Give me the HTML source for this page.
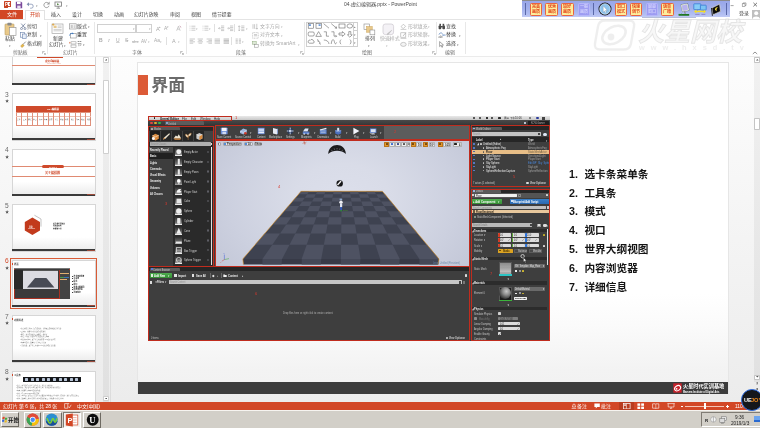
<!DOCTYPE html>
<html lang="zh"><head><meta charset="utf-8"><title>04.虚幻编辑器.pptx - PowerPoint</title>
<style>
html,body{margin:0;padding:0;}
body{width:760px;height:428px;overflow:hidden;position:relative;background:#eeeeee;
font-family:"Liberation Sans","Noto Sans CJK SC",sans-serif;}
#root{position:absolute;left:0;top:0;width:760px;height:428px;overflow:hidden;will-change:transform;}
#root div,#root span,#root svg{position:absolute;box-sizing:border-box;}
#root span{white-space:nowrap;}
</style></head><body><div id="root">
<div style="left:0px;top:0px;width:760px;height:57px;background:#ffffff;"></div>
<div style="left:0px;top:56.3px;width:760px;height:0.8px;background:#ebebeb;"></div>
<div style="left:0px;top:57px;width:760px;height:345px;background:linear-gradient(#fdfdfd,#ececec);"></div>
<div style="left:5.2px;top:1.2px;width:5.4px;height:6px;background:#fff;border:0.5px solid #c8452a;"></div>
<div style="left:3.8px;top:0.8px;width:4.6px;height:6.8px;background:#c8401f;border-radius:0.4px;"></div>
<span style="left:4.6px;top:2px;font-size:36.8px;line-height:36.8px;color:#fff;transform:scale(0.125,0.125);transform-origin:0 0;font-weight:bold;">P</span>
<div style="left:8.8px;top:2.6px;width:1.4px;height:0.5px;background:#d98a74;"></div>
<div style="left:8.8px;top:4px;width:1.4px;height:0.5px;background:#d98a74;"></div>
<svg style="left:15px;top:1px" width="8" height="8" viewBox="0 0 8 8"><path d="M0.8 0.8h5.4l1 1v5.4h-6.4z" fill="#7b4a9c"/><rect x="2" y="0.8" width="3.6" height="2.3" fill="#fff"/><rect x="2.2" y="4.6" width="3.4" height="2.6" fill="#e9dff0"/></svg>
<svg style="left:26px;top:1px" width="9" height="8" viewBox="0 0 9 8"><path d="M2 3.2h3.2a2 2 0 0 1 0 4h-1" fill="none" stroke="#8290b2" stroke-width="0.8"/><path d="M0.6 3.2l2.4-2v4z" fill="#8290b2"/></svg>
<span style="left:35.5px;top:4px;font-size:24px;line-height:24px;color:#888;transform:scale(0.125,0.125);transform-origin:0 0;">▾</span>
<svg style="left:42px;top:1px" width="9" height="8" viewBox="0 0 9 8"><path d="M6.4 2.2a2.6 2.6 0 1 0 0.6 2.6" fill="none" stroke="#9a9a9a" stroke-width="1"/><path d="M7.6 0.6v3h-3z" fill="#9a9a9a"/></svg>
<svg style="left:54px;top:1px" width="9" height="8" viewBox="0 0 9 8"><rect x="1" y="1" width="6.5" height="4.2" fill="none" stroke="#777" stroke-width="0.8"/><path d="M4.2 5.2v1.6M2.6 7.2h3.4" stroke="#777" stroke-width="0.8"/><path d="M3 2.2l2.4 1-2.4 1z" fill="#5a8a4a"/></svg>
<span style="left:65.5px;top:4px;font-size:24px;line-height:24px;color:#888;transform:scale(0.125,0.125);transform-origin:0 0;">▾</span>
<span style="left:343.6px;top:2px;font-size:40.0px;line-height:40.0px;color:#4a4a4a;transform:scale(0.125,0.125);transform-origin:0 0;">04.虚幻编辑器.pptx - PowerPoint</span>
<div style="left:0px;top:10.4px;width:22.8px;height:9px;background:#d24726;"></div>
<span style="left:6.6px;top:12px;font-size:40.8px;line-height:40.8px;color:#fff;transform:scale(0.125,0.125);transform-origin:0 0;">文件</span>
<div style="left:25.2px;top:10px;width:19.8px;height:9.8px;background:#fff;border:0.7px solid #e2e2e2;border-bottom:none;"></div>
<div style="left:0px;top:19.3px;width:25.2px;height:0.7px;background:#e4e4e4;"></div>
<div style="left:45px;top:19.3px;width:715px;height:0.7px;background:#e4e4e4;"></div>
<span style="left:30.2px;top:12px;font-size:40.8px;line-height:40.8px;color:#d24726;transform:scale(0.125,0.125);transform-origin:0 0;">开始</span>
<span style="left:50.6px;top:12px;font-size:39.2px;line-height:39.2px;color:#3c3c3c;transform:scale(0.125,0.125);transform-origin:0 0;">插入</span>
<span style="left:71.6px;top:12px;font-size:39.2px;line-height:39.2px;color:#3c3c3c;transform:scale(0.125,0.125);transform-origin:0 0;">设计</span>
<span style="left:92.6px;top:12px;font-size:39.2px;line-height:39.2px;color:#3c3c3c;transform:scale(0.125,0.125);transform-origin:0 0;">切换</span>
<span style="left:114.1px;top:12px;font-size:39.2px;line-height:39.2px;color:#3c3c3c;transform:scale(0.125,0.125);transform-origin:0 0;">动画</span>
<span style="left:134.2px;top:12px;font-size:39.2px;line-height:39.2px;color:#3c3c3c;transform:scale(0.125,0.125);transform-origin:0 0;">幻灯片放映</span>
<span style="left:169.6px;top:12px;font-size:39.2px;line-height:39.2px;color:#3c3c3c;transform:scale(0.125,0.125);transform-origin:0 0;">审阅</span>
<span style="left:191.1px;top:12px;font-size:39.2px;line-height:39.2px;color:#3c3c3c;transform:scale(0.125,0.125);transform-origin:0 0;">视图</span>
<span style="left:211.9px;top:12px;font-size:39.2px;line-height:39.2px;color:#3c3c3c;transform:scale(0.125,0.125);transform-origin:0 0;">情节提要</span>
<svg style="left:4px;top:22px" width="13" height="14" viewBox="0 0 13 14"><rect x="1" y="2" width="9" height="11" rx="0.8" fill="#e9c98a" stroke="#b99a5a" stroke-width="0.6"/><rect x="3.4" y="0.8" width="4.2" height="2.6" rx="0.6" fill="#8a8a8a"/><rect x="5.5" y="5.5" width="6.5" height="8" fill="#fff" stroke="#8c8c8c" stroke-width="0.6"/></svg>
<span style="left:5.2px;top:36px;font-size:39.2px;line-height:39.2px;color:#3c3c3c;transform:scale(0.125,0.125);transform-origin:0 0;">粘贴</span>
<span style="left:8.5px;top:44px;font-size:24px;line-height:24px;color:#777;transform:scale(0.125,0.125);transform-origin:0 0;">▾</span>
<svg style="left:19.5px;top:22.5px" width="7" height="7" viewBox="0 0 7 7"><path d="M1.2 0.6l3.6 4.2M5.2 0.6l-3.6 4.2" stroke="#5f6f8f" stroke-width="0.7"/><circle cx="1.5" cy="5.6" r="1" fill="none" stroke="#5f6f8f" stroke-width="0.6"/><circle cx="5" cy="5.6" r="1" fill="none" stroke="#5f6f8f" stroke-width="0.6"/></svg>
<span style="left:27px;top:24px;font-size:39.2px;line-height:39.2px;color:#3c3c3c;transform:scale(0.125,0.125);transform-origin:0 0;">剪切</span>
<svg style="left:19.5px;top:31.5px" width="7" height="7" viewBox="0 0 7 7"><rect x="0.6" y="0.6" width="3.8" height="4.6" fill="#fff" stroke="#6b83ad" stroke-width="0.6"/><rect x="2.4" y="2" width="3.8" height="4.6" fill="#e8eef8" stroke="#6b83ad" stroke-width="0.6"/></svg>
<span style="left:27px;top:32px;font-size:39.2px;line-height:39.2px;color:#3c3c3c;transform:scale(0.125,0.125);transform-origin:0 0;">复制</span>
<span style="left:40px;top:34px;font-size:24px;line-height:24px;color:#777;transform:scale(0.125,0.125);transform-origin:0 0;">▾</span>
<svg style="left:19.5px;top:40.5px" width="7" height="7" viewBox="0 0 7 7"><path d="M5.8 0.6l-3 3" stroke="#777" stroke-width="0.8"/><path d="M0.6 5.2l2-2.2 1.6 1.4-2 2.2z" fill="#e8b84a" stroke="#a8842a" stroke-width="0.4"/></svg>
<span style="left:27px;top:41px;font-size:39.2px;line-height:39.2px;color:#3c3c3c;transform:scale(0.125,0.125);transform-origin:0 0;">格式刷</span>
<span style="left:12.8px;top:50px;font-size:39.2px;line-height:39.2px;color:#6a6a6a;transform:scale(0.125,0.125);transform-origin:0 0;">剪贴板</span>
<svg style="left:41.5px;top:51px" width="4" height="4" viewBox="0 0 4 4"><path d="M0.5 0.5h2.2M0.5 0.5v2.2M1.6 1.6l1.8 1.8M3.4 2v1.4h-1.4" stroke="#888" stroke-width="0.5" fill="none"/></svg>
<div style="left:46.5px;top:22px;width:0.6px;height:32px;background:#e8e8e8;"></div>
<svg style="left:51px;top:22.5px" width="13" height="12" viewBox="0 0 13 12"><rect x="1" y="1" width="11" height="9.5" fill="#fdfdfd" stroke="#9a9a9a" stroke-width="0.6"/><rect x="2.6" y="2.6" width="3" height="2.4" fill="#e6c88c"/><path d="M6.6 3h4M6.6 4.4h4M2.6 6.4h8M2.6 7.8h8" stroke="#b0b0b0" stroke-width="0.6"/><path d="M2.2 0.4v2.4M1 1.6h2.4" stroke="#e0a030" stroke-width="0.7"/></svg>
<span style="left:53px;top:36px;font-size:39.2px;line-height:39.2px;color:#3c3c3c;transform:scale(0.125,0.125);transform-origin:0 0;">新建</span>
<span style="left:48.8px;top:42px;font-size:39.2px;line-height:39.2px;color:#3c3c3c;transform:scale(0.125,0.125);transform-origin:0 0;">幻灯片</span>
<span style="left:64px;top:44px;font-size:24px;line-height:24px;color:#777;transform:scale(0.125,0.125);transform-origin:0 0;">▾</span>
<svg style="left:68.5px;top:22.5px" width="8" height="7" viewBox="0 0 8 7"><rect x="0.6" y="0.8" width="6.6" height="5.2" fill="#fff" stroke="#8a8a8a" stroke-width="0.6"/><rect x="1.6" y="1.8" width="2.2" height="3.2" fill="#c8c8c8"/><path d="M4.6 2.2h1.8M4.6 3.4h1.8M4.6 4.6h1.8" stroke="#9a9a9a" stroke-width="0.5"/></svg>
<span style="left:76.7px;top:24px;font-size:39.2px;line-height:39.2px;color:#3c3c3c;transform:scale(0.125,0.125);transform-origin:0 0;">版式</span>
<span style="left:87.5px;top:25px;font-size:24px;line-height:24px;color:#777;transform:scale(0.125,0.125);transform-origin:0 0;">▾</span>
<svg style="left:68.5px;top:31.5px" width="8" height="7" viewBox="0 0 8 7"><rect x="1.6" y="1.6" width="5.6" height="4.4" fill="#fff" stroke="#8a8a8a" stroke-width="0.6"/><path d="M0.6 3.6a2.4 2.4 0 0 1 3.6-2" fill="none" stroke="#3b78c4" stroke-width="0.8"/><path d="M3.6 0.4l1.2 1.4-1.8 0.4z" fill="#3b78c4"/></svg>
<span style="left:76.7px;top:32px;font-size:39.2px;line-height:39.2px;color:#3c3c3c;transform:scale(0.125,0.125);transform-origin:0 0;">重置</span>
<svg style="left:68.5px;top:40.5px" width="8" height="7" viewBox="0 0 8 7"><rect x="2" y="0.8" width="5" height="2.2" fill="#fff" stroke="#8a8a8a" stroke-width="0.5"/><rect x="2" y="4" width="5" height="2.2" fill="#fff" stroke="#8a8a8a" stroke-width="0.5"/><path d="M0.4 0.8l1.2 1-1.2 1z" fill="#d06030"/></svg>
<span style="left:76.7px;top:41px;font-size:39.2px;line-height:39.2px;color:#3c3c3c;transform:scale(0.125,0.125);transform-origin:0 0;">节</span>
<span style="left:82.5px;top:43px;font-size:24px;line-height:24px;color:#777;transform:scale(0.125,0.125);transform-origin:0 0;">▾</span>
<span style="left:63px;top:50px;font-size:39.2px;line-height:39.2px;color:#6a6a6a;transform:scale(0.125,0.125);transform-origin:0 0;">幻灯片</span>
<div style="left:93.5px;top:22px;width:0.6px;height:32px;background:#e8e8e8;"></div>
<div style="left:96.5px;top:24px;width:39.5px;height:8.6px;background:#fff;border:0.6px solid #d0d0d0;"></div>
<span style="left:132.5px;top:27px;font-size:24px;line-height:24px;color:#aaa;transform:scale(0.125,0.125);transform-origin:0 0;">▾</span>
<div style="left:136.4px;top:24px;width:15.8px;height:8.6px;background:#fff;border:0.6px solid #d0d0d0;"></div>
<span style="left:148.8px;top:27px;font-size:24px;line-height:24px;color:#aaa;transform:scale(0.125,0.125);transform-origin:0 0;">▾</span>
<span style="left:155.5px;top:26px;font-size:44.0px;line-height:44.0px;color:#a8a8a8;transform:scale(0.125,0.125);transform-origin:0 0;">A</span>
<span style="left:159.3px;top:25px;font-size:24px;line-height:24px;color:#a8a8a8;transform:scale(0.125,0.125);transform-origin:0 0;">▴</span>
<span style="left:163.8px;top:26px;font-size:40px;line-height:40px;color:#a8a8a8;transform:scale(0.125,0.125);transform-origin:0 0;">A</span>
<span style="left:167.3px;top:25px;font-size:24px;line-height:24px;color:#a8a8a8;transform:scale(0.125,0.125);transform-origin:0 0;">▾</span>
<svg style="left:174.5px;top:24.5px" width="7" height="7" viewBox="0 0 7 7"><path d="M1.6 5.8l1.8-4.6 1.8 4.6M2.3 4.2h2.2" stroke="#b0b0b0" stroke-width="0.6" fill="none"/><path d="M4.6 1l1.6 1.4" stroke="#c9a0b0" stroke-width="1"/></svg>
<span style="left:98.8px;top:38px;font-size:40px;line-height:40px;color:#a8a8a8;transform:scale(0.125,0.125);transform-origin:0 0;font-weight:bold;">B</span>
<span style="left:107.8px;top:38px;font-size:40px;line-height:40px;color:#a8a8a8;transform:scale(0.125,0.125);transform-origin:0 0;font-style:italic;font-family:'Liberation Serif',serif;">I</span>
<span style="left:115.8px;top:38px;font-size:40px;line-height:40px;color:#a8a8a8;transform:scale(0.125,0.125);transform-origin:0 0;text-decoration:underline;">U</span>
<span style="left:124.6px;top:38px;font-size:40px;line-height:40px;color:#a8a8a8;transform:scale(0.125,0.125);transform-origin:0 0;text-decoration:line-through;">S</span>
<span style="left:131.5px;top:39px;font-size:33.6px;line-height:33.6px;color:#a8a8a8;transform:scale(0.125,0.125);transform-origin:0 0;text-decoration:line-through;">abc</span>
<span style="left:141px;top:39px;font-size:36.8px;line-height:36.8px;color:#a8a8a8;transform:scale(0.125,0.125);transform-origin:0 0;">AV</span>
<span style="left:147.5px;top:40px;font-size:24px;line-height:24px;color:#b8b8b8;transform:scale(0.125,0.125);transform-origin:0 0;">▾</span>
<span style="left:153.5px;top:38px;font-size:38.4px;line-height:38.4px;color:#a8a8a8;transform:scale(0.125,0.125);transform-origin:0 0;">Aa</span>
<span style="left:160px;top:40px;font-size:24px;line-height:24px;color:#b8b8b8;transform:scale(0.125,0.125);transform-origin:0 0;">▾</span>
<div style="left:166.4px;top:36.5px;width:0.5px;height:8px;background:#e0e0e0;"></div>
<span style="left:171.5px;top:38px;font-size:43.2px;line-height:43.2px;color:#a8a8a8;transform:scale(0.125,0.125);transform-origin:0 0;">A</span>
<span style="left:178.2px;top:40px;font-size:24px;line-height:24px;color:#b8b8b8;transform:scale(0.125,0.125);transform-origin:0 0;">▾</span>
<span style="left:132px;top:50px;font-size:39.2px;line-height:39.2px;color:#6a6a6a;transform:scale(0.125,0.125);transform-origin:0 0;">字体</span>
<svg style="left:180px;top:51px" width="4" height="4" viewBox="0 0 4 4"><path d="M0.5 0.5h2.2M0.5 0.5v2.2M1.6 1.6l1.8 1.8M3.4 2v1.4h-1.4" stroke="#888" stroke-width="0.5" fill="none"/></svg>
<div style="left:186px;top:22px;width:0.6px;height:32px;background:#e8e8e8;"></div>
<svg style="left:188.5px;top:24.5px" width="7" height="7" viewBox="0 0 7 7"><path d="M2.4 1.2h4M2.4 3.2h4M2.4 5.2h4M0.6 1.2h0.8M0.6 3.2h0.8M0.6 5.2h0.8" stroke="#a8a8a8" stroke-width="0.6" fill="none"/></svg>
<span style="left:196.3px;top:27px;font-size:24px;line-height:24px;color:#b8b8b8;transform:scale(0.125,0.125);transform-origin:0 0;">▾</span>
<svg style="left:201.5px;top:24.5px" width="7" height="7" viewBox="0 0 7 7"><path d="M2.4 1.2h4M2.4 3.2h4M2.4 5.2h4M0.6 1.2h0.8M0.6 3.2h0.8M0.6 5.2h0.8" stroke="#a8a8a8" stroke-width="0.6" fill="none"/></svg>
<span style="left:209.3px;top:27px;font-size:24px;line-height:24px;color:#b8b8b8;transform:scale(0.125,0.125);transform-origin:0 0;">▾</span>
<div style="left:214px;top:24px;width:0.5px;height:8px;background:#e0e0e0;"></div>
<svg style="left:218px;top:24.5px" width="7" height="7" viewBox="0 0 7 7"><path d="M3 1h3.2M3 2.6h3.2M3 4.2h3.2M3 5.6h3.2M0.6 3.3h2M1.6 2.3l-1 1 1 1" stroke="#a8a8a8" stroke-width="0.6" fill="none"/></svg>
<svg style="left:227px;top:24.5px" width="7" height="7" viewBox="0 0 7 7"><path d="M3 1h3.2M3 2.6h3.2M3 4.2h3.2M3 5.6h3.2M0.4 3.3h2M1.6 2.3l1 1-1 1" stroke="#a8a8a8" stroke-width="0.6" fill="none"/></svg>
<div style="left:234.3px;top:24px;width:0.5px;height:8px;background:#e0e0e0;"></div>
<svg style="left:238px;top:24.5px" width="7" height="7" viewBox="0 0 7 7"><path d="M3.2 1h3.2M3.2 2.6h3.2M3.2 4.2h3.2M3.2 5.6h3.2M1.2 0.8v5M0.3 1.8l0.9-1 0.9 1M0.3 4.8l0.9 1 0.9-1" stroke="#a8a8a8" stroke-width="0.6" fill="none"/></svg>
<span style="left:246px;top:27px;font-size:24px;line-height:24px;color:#b8b8b8;transform:scale(0.125,0.125);transform-origin:0 0;">▾</span>
<svg style="left:188.5px;top:37.5px" width="7" height="7" viewBox="0 0 7 7"><path d="M0.6 1h5.4M0.6 2.4h3.6M0.6 3.8h5.4M0.6 5.2h3.6" stroke="#a8a8a8" stroke-width="0.6" fill="none"/></svg>
<svg style="left:197px;top:37.5px" width="7" height="7" viewBox="0 0 7 7"><path d="M0.6 1h5.4M1.5 2.4h3.6M0.6 3.8h5.4M1.5 5.2h3.6" stroke="#a8a8a8" stroke-width="0.6" fill="none"/></svg>
<svg style="left:205.5px;top:37.5px" width="7" height="7" viewBox="0 0 7 7"><path d="M0.6 1h5.4M2.4 2.4h3.6M0.6 3.8h5.4M2.4 5.2h3.6" stroke="#a8a8a8" stroke-width="0.6" fill="none"/></svg>
<svg style="left:214px;top:37.5px" width="7" height="7" viewBox="0 0 7 7"><path d="M0.6 1h5.4M0.6 2.4h5.4M0.6 3.8h5.4M0.6 5.2h5.4" stroke="#a8a8a8" stroke-width="0.6" fill="none"/></svg>
<svg style="left:222.5px;top:37.5px" width="7" height="7" viewBox="0 0 7 7"><path d="M0.6 1h5.4M0.6 2.4h5.4M0.6 3.8h5.4M0.6 5.2h5.4" stroke="#909090" stroke-width="0.6" fill="none"/></svg>
<div style="left:230.6px;top:37px;width:0.5px;height:8px;background:#e0e0e0;"></div>
<svg style="left:234.5px;top:37.5px" width="7" height="7" viewBox="0 0 7 7"><path d="M0.6 1h2.2M0.6 2.4h2.2M0.6 3.8h2.2M0.6 5.2h2.2M3.8 1h2.2M3.8 2.4h2.2M3.8 3.8h2.2M3.8 5.2h2.2" stroke="#a8a8a8" stroke-width="0.6" fill="none"/></svg>
<span style="left:242px;top:40px;font-size:24px;line-height:24px;color:#b8b8b8;transform:scale(0.125,0.125);transform-origin:0 0;">▾</span>
<svg style="left:251.5px;top:22.5px" width="7" height="7" viewBox="0 0 7 7"><path d="M1 1.2v4.6M2.6 1.2v4.6M4.8 0.8v5.2M3.8 5l1 1.2 1-1.2" stroke="#a8a8a8" stroke-width="0.6" fill="none"/></svg>
<span style="left:259.8px;top:24px;font-size:39.2px;line-height:39.2px;color:#a8a8a8;transform:scale(0.125,0.125);transform-origin:0 0;">文字方向</span>
<span style="left:280.5px;top:25px;font-size:24px;line-height:24px;color:#b8b8b8;transform:scale(0.125,0.125);transform-origin:0 0;">▾</span>
<svg style="left:251.5px;top:31.5px" width="7" height="7" viewBox="0 0 7 7"><rect x="0.6" y="0.6" width="5.6" height="5.6" fill="none" stroke="#a8a8a8" stroke-width="0.6" stroke-dasharray="1 0.6"/><path d="M2 2.6h3M2 3.8h3" stroke="#a8a8a8" stroke-width="0.6"/></svg>
<span style="left:259.8px;top:32px;font-size:39.2px;line-height:39.2px;color:#a8a8a8;transform:scale(0.125,0.125);transform-origin:0 0;">对齐文本</span>
<span style="left:280.5px;top:34px;font-size:24px;line-height:24px;color:#b8b8b8;transform:scale(0.125,0.125);transform-origin:0 0;">▾</span>
<svg style="left:251.5px;top:40.5px" width="7" height="7" viewBox="0 0 7 7"><rect x="0.6" y="0.6" width="3.6" height="2.6" fill="#dfe9d8" stroke="#8aa878" stroke-width="0.5"/><rect x="2.6" y="3.6" width="3.6" height="2.6" fill="#fff" stroke="#8a8a8a" stroke-width="0.5"/></svg>
<span style="left:259.8px;top:41px;font-size:39.2px;line-height:39.2px;color:#a8a8a8;transform:scale(0.125,0.125);transform-origin:0 0;">转换为 SmartArt</span>
<span style="left:297.5px;top:43px;font-size:24px;line-height:24px;color:#b8b8b8;transform:scale(0.125,0.125);transform-origin:0 0;">▾</span>
<span style="left:236px;top:50px;font-size:39.2px;line-height:39.2px;color:#6a6a6a;transform:scale(0.125,0.125);transform-origin:0 0;">段落</span>
<svg style="left:299.5px;top:51px" width="4" height="4" viewBox="0 0 4 4"><path d="M0.5 0.5h2.2M0.5 0.5v2.2M1.6 1.6l1.8 1.8M3.4 2v1.4h-1.4" stroke="#888" stroke-width="0.5" fill="none"/></svg>
<div style="left:304px;top:22px;width:0.6px;height:32px;background:#e8e8e8;"></div>
<div style="left:306px;top:22px;width:51.5px;height:24.6px;background:#fff;border:0.6px solid #cfcfcf;"></div>
<div style="left:352.5px;top:22px;width:0.5px;height:24.6px;background:#cfcfcf;"></div>
<div style="left:352.5px;top:30px;width:5px;height:0.5px;background:#cfcfcf;"></div>
<div style="left:352.5px;top:38px;width:5px;height:0.5px;background:#cfcfcf;"></div>
<span style="left:353.6px;top:25px;font-size:24px;line-height:24px;color:#777;transform:scale(0.125,0.125);transform-origin:0 0;">▴</span>
<span style="left:353.6px;top:33px;font-size:24px;line-height:24px;color:#777;transform:scale(0.125,0.125);transform-origin:0 0;">▾</span>
<span style="left:353.6px;top:41px;font-size:24px;line-height:24px;color:#777;transform:scale(0.125,0.125);transform-origin:0 0;">▾</span>
<svg style="left:306.5px;top:22.2px" width="46" height="24" viewBox="0 0 46 24"><rect x="1.2" y="1.6" width="5.4" height="4.6" stroke="#5a5a5a" stroke-width="0.55" fill="none"/><rect x="1.9" y="2.3" width="2" height="1.6" fill="#5b8fd6"/><rect x="9" y="1.6" width="5.4" height="4.6" stroke="#5a5a5a" stroke-width="0.55" fill="none"/><rect x="11.6" y="2.3" width="2" height="1.6" fill="#5b8fd6"/><path d="M16.6 1.6l5.4 4.6" stroke="#5a5a5a" stroke-width="0.55" fill="none"/><path d="M24.2 1.6l5.4 4.6M29.6 6.2l-0.4-1.8M29.6 6.2l-1.8-0.2" stroke="#5a5a5a" stroke-width="0.55" fill="none"/><rect x="32" y="2" width="6" height="4" stroke="#5a5a5a" stroke-width="0.55" fill="none"/><ellipse cx="42.8" cy="4" rx="2.8" ry="2.1" stroke="#5a5a5a" stroke-width="0.55" fill="none"/><rect x="1.2" y="10" width="6" height="4" rx="1.2" stroke="#5a5a5a" stroke-width="0.55" fill="none"/><path d="M11.6 9.6l2.8 4.8h-5.6z" stroke="#5a5a5a" stroke-width="0.55" fill="none"/><path d="M16.8 9.8h2.6v4.4h2.6" stroke="#5a5a5a" stroke-width="0.55" fill="none"/><path d="M24.4 9.8h2.6v4.4h2.6M29.6 14.2l-1-1M29.6 14.2l-1 1" stroke="#5a5a5a" stroke-width="0.55" fill="none"/><path d="M32 11h3.4v-1.4l2.8 2.4-2.8 2.4v-1.4h-3.4z" stroke="#5a5a5a" stroke-width="0.55" fill="none"/><path d="M41.8 9.6v3.2h-1.4l2.4 2.4 2.4-2.4h-1.4v-3.2z" stroke="#5a5a5a" stroke-width="0.55" fill="none"/><path d="M1.4 20.6c-0.8-2 1-3 1.8-2.2 0.6-1.4 3-1.2 3 0.2 1.4 0.2 1.4 2.6-0.2 2.6h-3.4c-0.6 0-1-0.2-1.2-0.6z" stroke="#5a5a5a" stroke-width="0.55" fill="none"/><path d="M10 17.6l1.4 0.6-0.6 1 2.2 1-0.6 1.4 1.6 0.6" stroke="#5a5a5a" stroke-width="0.55" fill="none"/><path d="M16.8 18c3 0 5 1.6 5.2 4" stroke="#5a5a5a" stroke-width="0.55" fill="none"/><path d="M24.2 22c0.6-5.4 2.6-5.4 3.2-2.2 0.4 2.6 1.6 2.6 2.2 0.6" stroke="#5a5a5a" stroke-width="0.55" fill="none"/><path d="M34 17.6c-1.4 1.4-1.4 3.2 0 4.6" stroke="#5a5a5a" stroke-width="0.55" fill="none"/><path d="M43 17.6c1.4 1.4 1.4 3.2 0 4.6" stroke="#5a5a5a" stroke-width="0.55" fill="none"/></svg>
<svg style="left:363px;top:22.5px" width="13" height="13" viewBox="0 0 13 13"><rect x="1" y="1" width="5.4" height="5.4" fill="#fff" stroke="#8a8a8a" stroke-width="0.6"/><rect x="3.6" y="3.6" width="5.6" height="5.6" fill="#e9c98a" stroke="#c9a050" stroke-width="0.5"/><rect x="7" y="7" width="4.8" height="4.8" fill="#fff" stroke="#8a8a8a" stroke-width="0.6"/></svg>
<span style="left:364.6px;top:36px;font-size:39.2px;line-height:39.2px;color:#3c3c3c;transform:scale(0.125,0.125);transform-origin:0 0;">排列</span>
<span style="left:368px;top:44px;font-size:24px;line-height:24px;color:#777;transform:scale(0.125,0.125);transform-origin:0 0;">▾</span>
<span style="left:361.6px;top:50px;font-size:39.2px;line-height:39.2px;color:#6a6a6a;transform:scale(0.125,0.125);transform-origin:0 0;">绘图</span>
<svg style="left:382px;top:22.5px" width="13" height="14" viewBox="0 0 13 14"><rect x="1" y="1" width="10.6" height="10.6" rx="2.4" fill="#f4f2f6" stroke="#c4c0c8" stroke-width="0.6"/><path d="M9.8 7.2l-3.4 4.2-1.2 0.4 0.2-1.2z" fill="#c8c8c8" stroke="#aaa" stroke-width="0.3"/></svg>
<span style="left:379.6px;top:36px;font-size:39.2px;line-height:39.2px;color:#a8a8a8;transform:scale(0.125,0.125);transform-origin:0 0;">快速样式</span>
<span style="left:386.4px;top:44px;font-size:24px;line-height:24px;color:#b8b8b8;transform:scale(0.125,0.125);transform-origin:0 0;">▾</span>
<svg style="left:400px;top:22.5px" width="7" height="7" viewBox="0 0 7 7"><path d="M1 3.6l2.4-2.4 2.2 2.2-2.4 2.2z" fill="none" stroke="#a8a8a8" stroke-width="0.6"/><path d="M0.6 6.4h5.8" stroke="#c8c8c8" stroke-width="0.9"/></svg>
<span style="left:407.8px;top:24px;font-size:39.2px;line-height:39.2px;color:#a8a8a8;transform:scale(0.125,0.125);transform-origin:0 0;">形状填充</span>
<span style="left:428.3px;top:25px;font-size:24px;line-height:24px;color:#b8b8b8;transform:scale(0.125,0.125);transform-origin:0 0;">▾</span>
<svg style="left:400px;top:31.5px" width="7" height="7" viewBox="0 0 7 7"><rect x="0.8" y="0.8" width="5" height="4.4" fill="none" stroke="#a8a8a8" stroke-width="0.6"/><path d="M5.8 0.8l-2.8 3.2" stroke="#a8a8a8" stroke-width="0.7"/><path d="M0.6 6.4h5.8" stroke="#c8c8c8" stroke-width="0.9"/></svg>
<span style="left:407.8px;top:32px;font-size:39.2px;line-height:39.2px;color:#a8a8a8;transform:scale(0.125,0.125);transform-origin:0 0;">形状轮廓</span>
<span style="left:428.3px;top:34px;font-size:24px;line-height:24px;color:#b8b8b8;transform:scale(0.125,0.125);transform-origin:0 0;">▾</span>
<svg style="left:400px;top:40.5px" width="7" height="7" viewBox="0 0 7 7"><ellipse cx="3.4" cy="3.4" rx="2.8" ry="2" fill="#f4f4f4" stroke="#a8a8a8" stroke-width="0.6"/></svg>
<span style="left:407.8px;top:41px;font-size:39.2px;line-height:39.2px;color:#a8a8a8;transform:scale(0.125,0.125);transform-origin:0 0;">形状效果</span>
<span style="left:428.3px;top:43px;font-size:24px;line-height:24px;color:#b8b8b8;transform:scale(0.125,0.125);transform-origin:0 0;">▾</span>
<svg style="left:431.5px;top:51px" width="4" height="4" viewBox="0 0 4 4"><path d="M0.5 0.5h2.2M0.5 0.5v2.2M1.6 1.6l1.8 1.8M3.4 2v1.4h-1.4" stroke="#888" stroke-width="0.5" fill="none"/></svg>
<div style="left:435.5px;top:22px;width:0.6px;height:32px;background:#e8e8e8;"></div>
<svg style="left:437.5px;top:22.5px" width="8" height="7" viewBox="0 0 8 7"><rect x="0.6" y="2.4" width="2.6" height="3.8" rx="0.8" fill="#4a4a4a"/><rect x="4.4" y="2.4" width="2.6" height="3.8" rx="0.8" fill="#4a4a4a"/><rect x="1.4" y="0.8" width="1.6" height="2" fill="#4a4a4a"/><rect x="4.6" y="0.8" width="1.6" height="2" fill="#4a4a4a"/><rect x="3" y="3" width="1.6" height="1.4" fill="#4a4a4a"/></svg>
<span style="left:446px;top:24px;font-size:39.2px;line-height:39.2px;color:#3c3c3c;transform:scale(0.125,0.125);transform-origin:0 0;">查找</span>
<svg style="left:437.5px;top:31.5px" width="8" height="7" viewBox="0 0 8 7"><path d="M1 2.6a2 2 0 0 1 3.6-0.8" fill="none" stroke="#4a78b8" stroke-width="0.7"/><text x="0.4" y="6.4" font-size="3.6" fill="#555" font-family="Liberation Sans">ab</text><text x="4.2" y="4" font-size="3.6" fill="#4a78b8" font-family="Liberation Sans">ac</text></svg>
<span style="left:446px;top:32px;font-size:39.2px;line-height:39.2px;color:#3c3c3c;transform:scale(0.125,0.125);transform-origin:0 0;">替换</span>
<span style="left:459px;top:34px;font-size:24px;line-height:24px;color:#777;transform:scale(0.125,0.125);transform-origin:0 0;">▾</span>
<svg style="left:437.5px;top:40.5px" width="8" height="7" viewBox="0 0 8 7"><path d="M1.6 0.6v5l1.3-1.2 1 2 0.8-0.4-1-2h1.8z" fill="#fff" stroke="#555" stroke-width="0.5"/></svg>
<span style="left:446px;top:41px;font-size:39.2px;line-height:39.2px;color:#3c3c3c;transform:scale(0.125,0.125);transform-origin:0 0;">选择</span>
<span style="left:456.5px;top:43px;font-size:24px;line-height:24px;color:#777;transform:scale(0.125,0.125);transform-origin:0 0;">▾</span>
<span style="left:445px;top:50px;font-size:39.2px;line-height:39.2px;color:#6a6a6a;transform:scale(0.125,0.125);transform-origin:0 0;">编辑</span>
<div style="left:465px;top:22px;width:0.6px;height:32px;background:#e8e8e8;"></div>
<svg style="left:752px;top:51px" width="6" height="4" viewBox="0 0 6 4"><path d="M0.8 3l2.2-2 2.2 2" fill="none" stroke="#666" stroke-width="0.7"/></svg>
<svg style="left:728px;top:1px" width="32" height="8" viewBox="0 0 32 8"><path d="M2.6 4.6h3" stroke="#666" stroke-width="0.6"/><rect x="14.2" y="2.8" width="2.8" height="2.6" fill="none" stroke="#666" stroke-width="0.5"/><path d="M15.2 2.8v-0.9h2.8v2.6h-1" fill="none" stroke="#666" stroke-width="0.5"/><path d="M25.4 1.8l3.6 3.6M29 1.8l-3.6 3.6" stroke="#444" stroke-width="0.7"/></svg>
<span style="left:739px;top:11px;font-size:39.2px;line-height:39.2px;color:#444;transform:scale(0.125,0.125);transform-origin:0 0;">登录</span>
<div style="left:751.8px;top:9.8px;width:8.4px;height:9.4px;background:#bfbfbf;"></div>
<svg style="left:752px;top:10px" width="8" height="9" viewBox="0 0 8 9"><circle cx="4.2" cy="3.2" r="2" fill="#fff"/><path d="M0.4 9.2c0-3.600 7.600-3.600 7.600 0z" fill="#fff"/></svg>
<div style="left:110.1px;top:57px;width:0.8px;height:345px;background:linear-gradient(#e8e8e8,#dcdcdc);"></div>
<div style="left:102.8px;top:57px;width:6.2px;height:345px;background:linear-gradient(#f1f1f1,#e0e0e0);"></div>
<div style="left:102.7px;top:57.3px;width:6.2px;height:6px;background:#fff;border:0.5px solid #cfcfcf;border-radius:0.9px;"></div>
<svg style="left:104.5px;top:59.35px" width="2.6" height="1.5" viewBox="0 0 2.6 1.5"><polygon points="0,1.5 1.3,0 2.6,1.5" fill="#555"/></svg>
<div style="left:102.7px;top:80.4px;width:6.2px;height:73.8px;background:#fff;border:0.5px solid #cfcfcf;border-radius:0.9px;"></div>
<div style="left:102.7px;top:395.8px;width:6.2px;height:5.4px;background:#fff;border:0.5px solid #cfcfcf;border-radius:0.9px;"></div>
<svg style="left:104.5px;top:397.75px" width="2.6" height="1.5" viewBox="0 0 2.6 1.5"><polygon points="0,0 1.3,1.5 2.6,0" fill="#555"/></svg>
<div style="left:11.6px;top:57.2px;width:84px;height:28px;background:linear-gradient(#ffffff 50%,#f0f0f0 86%,#ececec 100%);border:0.5px solid #d6d6d6;border-top:none;"></div>
<div style="left:11.9px;top:83.2px;width:83.4px;height:1.9px;background:#3c3c3c;"></div>
<div style="left:86.6px;top:83.5px;width:8px;height:1.2px;background:#9c4a3a;"></div>
<span style="left:44.8px;top:60px;font-size:20.8px;line-height:20.8px;color:#cf4a2b;transform:scale(0.125,0.125);transform-origin:0 0;font-weight:bold;">虚幻4编辑器</span>
<span style="left:46.5px;top:63px;font-size:11.2px;line-height:11.2px;color:#e09a86;transform:scale(0.125,0.125);transform-origin:0 0;">Unreal Engine 4 Editor</span>
<div style="left:37px;top:57px;width:26px;height:0.5px;background:#cf4a2b;"></div>
<div style="left:12px;top:65.3px;width:83.4px;height:0.5px;background:#e08a72;"></div>
<div style="left:11.6px;top:93.2px;width:84px;height:47.6px;background:linear-gradient(#ffffff 70%,#f0f0f0 92%,#ececec 100%);border:0.5px solid #d6d6d6;"></div>
<div style="left:11.9px;top:138.3px;width:83.4px;height:2.2px;background:#3a3a3a;"></div>
<div style="left:86.6px;top:138.7px;width:8px;height:1.4px;background:#9c4a3a;"></div>
<span style="left:5.3px;top:91px;font-size:52.8px;line-height:52.8px;color:#6a6a6a;transform:scale(0.125,0.125);transform-origin:0 0;">3</span>
<span style="left:5.2px;top:98px;font-size:33.6px;line-height:33.6px;color:#4a4a4a;transform:scale(0.125,0.125);transform-origin:0 0;">★</span>
<div style="left:16px;top:106.2px;width:74.6px;height:5.4px;background:#cf4a2b;"></div>
<span style="left:47px;top:108px;font-size:19.2px;line-height:19.2px;color:#fff;transform:scale(0.125,0.125);transform-origin:0 0;font-weight:bold;">UE4编辑器</span>
<div style="left:16px;top:112.0px;width:74.6px;height:14.2px;background:#fff;border:0.5px solid #df917c;"></div>
<div style="left:16px;top:116.2px;width:74.6px;height:0.4px;background:#ecc0b4;"></div>
<div style="left:21.32857142857143px;top:112.0px;width:0.4px;height:14.2px;background:#df917c;"></div>
<div style="left:26.65714285714286px;top:112.0px;width:0.4px;height:14.2px;background:#df917c;"></div>
<div style="left:31.985714285714284px;top:112.0px;width:0.4px;height:14.2px;background:#df917c;"></div>
<div style="left:37.31428571428572px;top:112.0px;width:0.4px;height:14.2px;background:#df917c;"></div>
<div style="left:42.64285714285714px;top:112.0px;width:0.4px;height:14.2px;background:#df917c;"></div>
<div style="left:47.97142857142857px;top:112.0px;width:0.4px;height:14.2px;background:#df917c;"></div>
<div style="left:53.3px;top:112.0px;width:0.4px;height:14.2px;background:#df917c;"></div>
<div style="left:58.628571428571426px;top:112.0px;width:0.4px;height:14.2px;background:#df917c;"></div>
<div style="left:63.957142857142856px;top:112.0px;width:0.4px;height:14.2px;background:#df917c;"></div>
<div style="left:69.28571428571428px;top:112.0px;width:0.4px;height:14.2px;background:#df917c;"></div>
<div style="left:74.6142857142857px;top:112.0px;width:0.4px;height:14.2px;background:#df917c;"></div>
<div style="left:79.94285714285714px;top:112.0px;width:0.4px;height:14.2px;background:#df917c;"></div>
<div style="left:85.27142857142857px;top:112.0px;width:0.4px;height:14.2px;background:#df917c;"></div>
<span style="left:17.4px;top:119px;font-size:13.6px;line-height:13.6px;color:#555;transform:scale(0.125,0.125);transform-origin:0 0;">菜单</span>
<span style="left:22.728571428571428px;top:119px;font-size:13.6px;line-height:13.6px;color:#555;transform:scale(0.125,0.125);transform-origin:0 0;">工具</span>
<span style="left:28.057142857142857px;top:119px;font-size:13.6px;line-height:13.6px;color:#555;transform:scale(0.125,0.125);transform-origin:0 0;">模式</span>
<span style="left:33.385714285714286px;top:119px;font-size:13.6px;line-height:13.6px;color:#555;transform:scale(0.125,0.125);transform-origin:0 0;">视口</span>
<span style="left:38.714285714285715px;top:119px;font-size:13.6px;line-height:13.6px;color:#555;transform:scale(0.125,0.125);transform-origin:0 0;">大纲</span>
<span style="left:44.04285714285714px;top:119px;font-size:13.6px;line-height:13.6px;color:#555;transform:scale(0.125,0.125);transform-origin:0 0;">内容</span>
<span style="left:49.37142857142857px;top:119px;font-size:13.6px;line-height:13.6px;color:#555;transform:scale(0.125,0.125);transform-origin:0 0;">细节</span>
<span style="left:54.699999999999996px;top:119px;font-size:13.6px;line-height:13.6px;color:#555;transform:scale(0.125,0.125);transform-origin:0 0;">关卡</span>
<span style="left:60.028571428571425px;top:119px;font-size:13.6px;line-height:13.6px;color:#555;transform:scale(0.125,0.125);transform-origin:0 0;">蓝图</span>
<span style="left:65.35714285714286px;top:119px;font-size:13.6px;line-height:13.6px;color:#555;transform:scale(0.125,0.125);transform-origin:0 0;">材质</span>
<span style="left:70.68571428571428px;top:119px;font-size:13.6px;line-height:13.6px;color:#555;transform:scale(0.125,0.125);transform-origin:0 0;">粒子</span>
<span style="left:76.0142857142857px;top:119px;font-size:13.6px;line-height:13.6px;color:#555;transform:scale(0.125,0.125);transform-origin:0 0;">动画</span>
<span style="left:81.34285714285714px;top:119px;font-size:13.6px;line-height:13.6px;color:#555;transform:scale(0.125,0.125);transform-origin:0 0;">地形</span>
<span style="left:86.67142857142858px;top:119px;font-size:13.6px;line-height:13.6px;color:#555;transform:scale(0.125,0.125);transform-origin:0 0;">光照</span>
<div style="left:11.6px;top:148.6px;width:84px;height:47.6px;background:linear-gradient(#ffffff 70%,#f0f0f0 92%,#ececec 100%);border:0.5px solid #d6d6d6;"></div>
<div style="left:11.9px;top:193.7px;width:83.4px;height:2.2px;background:#3a3a3a;"></div>
<div style="left:86.6px;top:194.1px;width:8px;height:1.4px;background:#9c4a3a;"></div>
<span style="left:5.3px;top:146px;font-size:52.8px;line-height:52.8px;color:#6a6a6a;transform:scale(0.125,0.125);transform-origin:0 0;">4</span>
<span style="left:5.2px;top:154px;font-size:33.6px;line-height:33.6px;color:#4a4a4a;transform:scale(0.125,0.125);transform-origin:0 0;">★</span>
<div style="left:12px;top:166.2px;width:83.4px;height:0.5px;background:#e08a72;"></div>
<div style="left:12px;top:176.0px;width:83.4px;height:0.5px;background:#e08a72;"></div>
<div style="left:42px;top:164.6px;width:22.4px;height:3.8px;background:#cf4a2b;border-radius:2px;"></div>
<span style="left:49.2px;top:166px;font-size:17.6px;line-height:17.6px;color:#fff;transform:scale(0.125,0.125);transform-origin:0 0;font-weight:bold;">PART  1</span>
<span style="left:45.2px;top:171px;font-size:24px;line-height:24px;color:#cf4a2b;transform:scale(0.125,0.125);transform-origin:0 0;font-weight:bold;">关于编辑器</span>
<span style="left:50px;top:174px;font-size:11.2px;line-height:11.2px;color:#e09a86;transform:scale(0.125,0.125);transform-origin:0 0;">About Editor</span>
<div style="left:11.6px;top:204.2px;width:84px;height:47.6px;background:linear-gradient(#ffffff 70%,#f0f0f0 92%,#ececec 100%);border:0.5px solid #d6d6d6;"></div>
<div style="left:11.9px;top:249.29999999999998px;width:83.4px;height:2.2px;background:#3a3a3a;"></div>
<div style="left:86.6px;top:249.7px;width:8px;height:1.4px;background:#9c4a3a;"></div>
<span style="left:5.3px;top:202px;font-size:52.8px;line-height:52.8px;color:#6a6a6a;transform:scale(0.125,0.125);transform-origin:0 0;">5</span>
<span style="left:5.2px;top:209px;font-size:33.6px;line-height:33.6px;color:#4a4a4a;transform:scale(0.125,0.125);transform-origin:0 0;">★</span>
<svg style="left:22px;top:213.2px" width="22" height="24" viewBox="0 0 22 24"><path d="M12.4 2.2l6.6 3.8v7.6" fill="none" stroke="#8a8a8a" stroke-width="0.5"/><path d="M10.4 4.6l7.6 4.3v8.7l-7.6 4.3-7.6-4.3v-8.7z" fill="#c23a1c"/></svg>
<span style="left:29.4px;top:226px;font-size:14.4px;line-height:14.4px;color:#fff;transform:scale(0.125,0.125);transform-origin:0 0;font-weight:bold;">目录</span>
<span style="left:28px;top:228px;font-size:10.4px;line-height:10.4px;color:#fff;transform:scale(0.125,0.125);transform-origin:0 0;">CONTENTS</span>
<span style="left:53.4px;top:223px;font-size:13.6px;line-height:13.6px;color:#333;transform:scale(0.125,0.125);transform-origin:0 0;font-weight:bold;">关于虚幻编辑器</span>
<span style="left:53.4px;top:225px;font-size:13.6px;line-height:13.6px;color:#333;transform:scale(0.125,0.125);transform-origin:0 0;font-weight:bold;">编辑器界面</span>
<span style="left:53.4px;top:228px;font-size:13.6px;line-height:13.6px;color:#333;transform:scale(0.125,0.125);transform-origin:0 0;font-weight:bold;">快捷键介绍</span>
<div style="left:10.0px;top:258.20000000000005px;width:87.2px;height:50.6px;background:#f1f1f1;border:1.3px solid #d95b36;"></div>
<div style="left:11.6px;top:259.6px;width:84px;height:47.6px;background:linear-gradient(#ffffff 70%,#f0f0f0 92%,#ececec 100%);border:0.5px solid #d6d6d6;"></div>
<div style="left:11.9px;top:304.70000000000005px;width:83.4px;height:2.2px;background:#3a3a3a;"></div>
<div style="left:86.6px;top:305.1px;width:8px;height:1.4px;background:#9c4a3a;"></div>
<span style="left:5.3px;top:257px;font-size:52.8px;line-height:52.8px;color:#d24726;transform:scale(0.125,0.125);transform-origin:0 0;">6</span>
<span style="left:5.2px;top:265px;font-size:33.6px;line-height:33.6px;color:#4a4a4a;transform:scale(0.125,0.125);transform-origin:0 0;">★</span>
<div style="left:12.4px;top:262.6px;width:0.9px;height:2.2px;background:#cf4a2b;"></div>
<span style="left:13.8px;top:263px;font-size:18.4px;line-height:18.4px;color:#555;transform:scale(0.125,0.125);transform-origin:0 0;font-weight:bold;">界面</span>
<div style="left:13.6px;top:267.8px;width:56.4px;height:31.6px;background:#3b3b3b;border:0.5px solid #a83222;"></div>
<div style="left:23px;top:271.0px;width:35px;height:17.6px;background:#dcdce2;"></div>
<svg style="left:23px;top:271.0px" width="35" height="17.6" viewBox="0 0 35 17.6"><path d="M12 7h11.4l8 9.5h-27.4z" fill="#484b55"/></svg>
<div style="left:13.8px;top:268.0px;width:56px;height:1.4px;background:#777;"></div>
<div style="left:14px;top:269.6px;width:8.6px;height:19.4px;background:#2a2a2a;"></div>
<div style="left:58.6px;top:269.6px;width:11px;height:29.6px;background:#444;border-left:0.5px solid #a83222;"></div>
<div style="left:23px;top:269.5px;width:35px;height:1.5px;background:#555;"></div>
<div style="left:59.6px;top:279.0px;width:7px;height:0.8px;background:#e0b070;"></div>
<div style="left:59.6px;top:277.20000000000005px;width:4px;height:0.9px;background:#4a9a4a;"></div>
<div style="left:64px;top:277.20000000000005px;width:5px;height:0.9px;background:#3a78b8;"></div>
<div style="left:59.6px;top:273.20000000000005px;width:9px;height:0.6px;background:#e0b070;"></div>
<span style="left:72px;top:275px;font-size:14.4px;line-height:14.4px;color:#222;transform:scale(0.125,0.125);transform-origin:0 0;font-weight:bold;">■ 选卡条菜单条</span>
<span style="left:72px;top:277px;font-size:14.4px;line-height:14.4px;color:#222;transform:scale(0.125,0.125);transform-origin:0 0;font-weight:bold;">■ 工具条</span>
<span style="left:72px;top:280px;font-size:14.4px;line-height:14.4px;color:#222;transform:scale(0.125,0.125);transform-origin:0 0;font-weight:bold;">■ 模式</span>
<span style="left:72px;top:283px;font-size:14.4px;line-height:14.4px;color:#222;transform:scale(0.125,0.125);transform-origin:0 0;font-weight:bold;">■ 视口</span>
<span style="left:72px;top:286px;font-size:14.4px;line-height:14.4px;color:#222;transform:scale(0.125,0.125);transform-origin:0 0;font-weight:bold;">■ 世界大纲视图</span>
<span style="left:72px;top:288px;font-size:14.4px;line-height:14.4px;color:#222;transform:scale(0.125,0.125);transform-origin:0 0;font-weight:bold;">■ 内容浏览器</span>
<span style="left:72px;top:291px;font-size:14.4px;line-height:14.4px;color:#222;transform:scale(0.125,0.125);transform-origin:0 0;font-weight:bold;">■ 详细信息</span>
<div style="left:11.6px;top:315.2px;width:84px;height:47.6px;background:linear-gradient(#ffffff 70%,#f0f0f0 92%,#ececec 100%);border:0.5px solid #d6d6d6;"></div>
<div style="left:11.9px;top:360.3px;width:83.4px;height:2.2px;background:#3a3a3a;"></div>
<div style="left:86.6px;top:360.7px;width:8px;height:1.4px;background:#9c4a3a;"></div>
<span style="left:5.3px;top:313px;font-size:52.8px;line-height:52.8px;color:#6a6a6a;transform:scale(0.125,0.125);transform-origin:0 0;">7</span>
<span style="left:5.2px;top:320px;font-size:33.6px;line-height:33.6px;color:#4a4a4a;transform:scale(0.125,0.125);transform-origin:0 0;">★</span>
<div style="left:12.4px;top:318.2px;width:0.9px;height:2.2px;background:#cf4a2b;"></div>
<span style="left:13.8px;top:319px;font-size:18.4px;line-height:18.4px;color:#555;transform:scale(0.125,0.125);transform-origin:0 0;font-weight:bold;">功能概述</span>
<span style="left:20px;top:328px;font-size:12.4px;line-height:12.4px;color:#6a6a6a;transform:scale(0.125,0.125);transform-origin:0 0;">• 选卡条和菜单条：包含编辑器，各种窗口和帮助的菜单命令</span>
<span style="left:20px;top:331px;font-size:12.4px;line-height:12.4px;color:#6a6a6a;transform:scale(0.125,0.125);transform-origin:0 0;">• 工具条：快速访问常用的命令和操作</span>
<span style="left:20px;top:334px;font-size:12.4px;line-height:12.4px;color:#6a6a6a;transform:scale(0.125,0.125);transform-origin:0 0;">• 模式：选择编辑器的工具模式，如放置</span>
<span style="left:20px;top:336px;font-size:12.4px;line-height:12.4px;color:#6a6a6a;transform:scale(0.125,0.125);transform-origin:0 0;">• 视口：场景，在其中查看和编辑关卡内容</span>
<span style="left:20px;top:339px;font-size:12.4px;line-height:12.4px;color:#6a6a6a;transform:scale(0.125,0.125);transform-origin:0 0;">• 世界大纲视图：显示关卡中的所有Actor的层级列表</span>
<span style="left:20px;top:342px;font-size:12.4px;line-height:12.4px;color:#6a6a6a;transform:scale(0.125,0.125);transform-origin:0 0;">• 内容浏览器：创建导入管理项目资源</span>
<span style="left:20px;top:345px;font-size:12.4px;line-height:12.4px;color:#6a6a6a;transform:scale(0.125,0.125);transform-origin:0 0;">• 详细信息：显示关卡中选中Actor的属性和设置信息</span>
<div style="left:11.6px;top:370.6px;width:84px;height:47.6px;background:linear-gradient(#ffffff 70%,#f0f0f0 92%,#ececec 100%);border:0.5px solid #d6d6d6;"></div>
<div style="left:11.9px;top:415.70000000000005px;width:83.4px;height:2.2px;background:#3a3a3a;"></div>
<div style="left:86.6px;top:416.1px;width:8px;height:1.4px;background:#9c4a3a;"></div>
<span style="left:5.3px;top:368px;font-size:52.8px;line-height:52.8px;color:#6a6a6a;transform:scale(0.125,0.125);transform-origin:0 0;">8</span>
<span style="left:5.2px;top:376px;font-size:33.6px;line-height:33.6px;color:#4a4a4a;transform:scale(0.125,0.125);transform-origin:0 0;">★</span>
<div style="left:12.4px;top:373.6px;width:0.9px;height:2.2px;background:#cf4a2b;"></div>
<span style="left:13.8px;top:374px;font-size:18.4px;line-height:18.4px;color:#555;transform:scale(0.125,0.125);transform-origin:0 0;font-weight:bold;">工具条</span>
<div style="left:23px;top:377.20000000000005px;width:58px;height:4.6px;background:#16181c;"></div>
<div style="left:25.0px;top:378.0px;width:3px;height:3px;background:#b9c6d8;border-radius:0.6px;"></div>
<div style="left:30.6px;top:378.0px;width:3px;height:3px;background:#b9c6d8;border-radius:0.6px;"></div>
<div style="left:36.2px;top:378.0px;width:3px;height:3px;background:#b9c6d8;border-radius:0.6px;"></div>
<div style="left:41.8px;top:378.0px;width:3px;height:3px;background:#b9c6d8;border-radius:0.6px;"></div>
<div style="left:47.4px;top:378.0px;width:3px;height:3px;background:#b9c6d8;border-radius:0.6px;"></div>
<div style="left:53.0px;top:378.0px;width:3px;height:3px;background:#b9c6d8;border-radius:0.6px;"></div>
<div style="left:58.599999999999994px;top:378.0px;width:3px;height:3px;background:#b9c6d8;border-radius:0.6px;"></div>
<div style="left:64.19999999999999px;top:378.0px;width:3px;height:3px;background:#b9c6d8;border-radius:0.6px;"></div>
<div style="left:69.8px;top:378.0px;width:3px;height:3px;background:#b9c6d8;border-radius:0.6px;"></div>
<div style="left:75.4px;top:378.0px;width:3px;height:3px;background:#b9c6d8;border-radius:0.6px;"></div>
<span style="left:15.6px;top:385px;font-size:12.4px;line-height:12.4px;color:#6a6a6a;transform:scale(0.125,0.125);transform-origin:0 0;">• 保存：对当前打开的关卡进行保存，并保存到磁盘中</span>
<span style="left:15.6px;top:387px;font-size:12.4px;line-height:12.4px;color:#6a6a6a;transform:scale(0.125,0.125);transform-origin:0 0;">• 版本控制：通过它可以对资源进行管理，在团队协作时非常有用</span>
<span style="left:15.6px;top:390px;font-size:12.4px;line-height:12.4px;color:#6a6a6a;transform:scale(0.125,0.125);transform-origin:0 0;">• 内容：快捷打开内容浏览器的功能</span>
<span style="left:15.6px;top:393px;font-size:12.4px;line-height:12.4px;color:#6a6a6a;transform:scale(0.125,0.125);transform-origin:0 0;">• 市场：打开Epic Games官方商城</span>
<span style="left:15.6px;top:395px;font-size:12.4px;line-height:12.4px;color:#6a6a6a;transform:scale(0.125,0.125);transform-origin:0 0;">• 设置：对世界设置和项目设置以及引擎的可视性选项进行调整，编辑器、选择项等设置选项</span>
<span style="left:15.6px;top:398px;font-size:12.4px;line-height:12.4px;color:#6a6a6a;transform:scale(0.125,0.125);transform-origin:0 0;">• 蓝图：创建关卡蓝图或者打开蓝图编辑器窗口，并快速访问关卡蓝图</span>
<div style="left:137.2px;top:61.8px;width:591.4px;height:332.4px;background:linear-gradient(#ffffff 0%,#ffffff 70%,#fbfbfb 79%,#f3f3f3 93%,#f1f1f1 100%);border:0.6px solid #e6e6e6;"></div>
<div style="left:137.6px;top:74.8px;width:10.4px;height:19.8px;background:#dc5b37;"></div>
<span style="left:151.2px;top:77px;font-size:17px;line-height:17px;color:#6b6b6b;font-weight:bold;">界面</span>
<div style="left:754.4px;top:57px;width:5.6px;height:325px;background:linear-gradient(#f1f1f1,#e1e1e1);"></div>
<div style="left:754.4px;top:57.4px;width:5.8px;height:5.8px;background:#fff;border:0.5px solid #c4c4c4;border-radius:0.8px;"></div>
<svg style="left:756.0px;top:59.45px" width="2.6" height="1.5" viewBox="0 0 2.6 1.5"><polygon points="0,1.5 1.3,0 2.6,1.5" fill="#555"/></svg>
<div style="left:754.4px;top:118.4px;width:5.8px;height:11.2px;background:#fff;border:0.5px solid #c4c4c4;border-radius:0.8px;"></div>
<div style="left:754.4px;top:374.6px;width:5.8px;height:5.2px;background:#fff;border:0.5px solid #c4c4c4;border-radius:0.8px;"></div>
<svg style="left:756.0px;top:376.45px" width="2.6" height="1.5" viewBox="0 0 2.6 1.5"><polygon points="0,0 1.3,1.5 2.6,0" fill="#555"/></svg>
<svg style="left:756.1px;top:382.0px" width="2.4" height="1.2" viewBox="0 0 2.4 1.2"><polygon points="0,1.2 1.2,0 2.4,1.2" fill="#666"/></svg>
<svg style="left:756.1px;top:383.4px" width="2.4" height="1.2" viewBox="0 0 2.4 1.2"><polygon points="0,1.2 1.2,0 2.4,1.2" fill="#666"/></svg>
<svg style="left:756.1px;top:387.8px" width="2.4" height="1.2" viewBox="0 0 2.4 1.2"><polygon points="0,0 1.2,1.2 2.4,0" fill="#666"/></svg>
<svg style="left:756.1px;top:389.2px" width="2.4" height="1.2" viewBox="0 0 2.4 1.2"><polygon points="0,0 1.2,1.2 2.4,0" fill="#666"/></svg>
<div style="left:137.6px;top:382.1px;width:590.8px;height:11.8px;background:#3c3c3c;"></div>
<svg style="left:672.6px;top:383.2px" width="9" height="10" viewBox="0 0 9 10"><rect x="0.3" y="0.3" width="8.4" height="9.4" fill="#c8202a"/><ellipse cx="4.6" cy="5.2" rx="3.2" ry="2.4" transform="rotate(-35 4.6 5.2)" fill="none" stroke="#fff" stroke-width="1.1"/><circle cx="3.6" cy="5.8" r="0.9" fill="#fff"/></svg>
<span style="left:682.6px;top:384px;font-size:41.2px;line-height:41.2px;color:#fff;transform:scale(0.125,0.125);transform-origin:0 0;font-weight:bold;">火星时代实训基地</span>
<span style="left:682.8px;top:391px;font-size:20.8px;line-height:20.8px;color:#fff;transform:scale(0.11779,0.125);transform-origin:0 0;font-weight:bold;letter-spacing:0.03px;">Marsera Institute of Digital Arts</span>
<span style="left:569px;top:169px;font-size:10.7px;line-height:10.7px;color:#151515;font-weight:bold;">1.</span>
<span style="left:584.4px;top:169px;font-size:10.7px;line-height:10.7px;color:#151515;font-weight:bold;">选卡条菜单条</span>
<span style="left:569px;top:188px;font-size:10.7px;line-height:10.7px;color:#151515;font-weight:bold;">2.</span>
<span style="left:584.4px;top:188px;font-size:10.7px;line-height:10.7px;color:#151515;font-weight:bold;">工具条</span>
<span style="left:569px;top:206px;font-size:10.7px;line-height:10.7px;color:#151515;font-weight:bold;">3.</span>
<span style="left:584.4px;top:206px;font-size:10.7px;line-height:10.7px;color:#151515;font-weight:bold;">模式</span>
<span style="left:569px;top:225px;font-size:10.7px;line-height:10.7px;color:#151515;font-weight:bold;">4.</span>
<span style="left:584.4px;top:225px;font-size:10.7px;line-height:10.7px;color:#151515;font-weight:bold;">视口</span>
<span style="left:569px;top:244px;font-size:10.7px;line-height:10.7px;color:#151515;font-weight:bold;">5.</span>
<span style="left:584.4px;top:244px;font-size:10.7px;line-height:10.7px;color:#151515;font-weight:bold;">世界大纲视图</span>
<span style="left:569px;top:263px;font-size:10.7px;line-height:10.7px;color:#151515;font-weight:bold;">6.</span>
<span style="left:584.4px;top:263px;font-size:10.7px;line-height:10.7px;color:#151515;font-weight:bold;">内容浏览器</span>
<span style="left:569px;top:282px;font-size:10.7px;line-height:10.7px;color:#151515;font-weight:bold;">7.</span>
<span style="left:584.4px;top:282px;font-size:10.7px;line-height:10.7px;color:#151515;font-weight:bold;">详细信息</span>
<div style="left:148.2px;top:115.8px;width:401.4px;height:225.2px;background:#3e3e3e;"></div>
<div style="left:148.2px;top:115.8px;width:401.4px;height:4.2px;background:linear-gradient(#e9e9e9,#c8c8c8);"></div>
<div style="left:153.6px;top:116.9px;width:1.8px;height:2.2px;background:#111;border-radius:0.9px;"></div>
<span style="left:159.6px;top:117px;font-size:24px;line-height:24px;color:#111;transform:scale(0.125,0.125);transform-origin:0 0;font-weight:bold;">Unreal Editor</span>
<span style="left:182.2px;top:117px;font-size:24px;line-height:24px;color:#222;transform:scale(0.125,0.125);transform-origin:0 0;">File</span>
<span style="left:191px;top:117px;font-size:24px;line-height:24px;color:#222;transform:scale(0.125,0.125);transform-origin:0 0;">Edit</span>
<span style="left:200px;top:117px;font-size:24px;line-height:24px;color:#222;transform:scale(0.125,0.125);transform-origin:0 0;">Window</span>
<span style="left:214.4px;top:117px;font-size:24px;line-height:24px;color:#222;transform:scale(0.125,0.125);transform-origin:0 0;">Help</span>
<div style="left:472.8px;top:116.8px;width:2.6px;height:2.5px;background:#2c2c2c;border-radius:1.3px;"></div>
<div style="left:478.8px;top:116.8px;width:2.6px;height:2.5px;background:#2c2c2c;border-radius:1.3px;"></div>
<div style="left:486px;top:116.8px;width:2px;height:2.5px;background:#2c2c2c;border-radius:0.3px;"></div>
<div style="left:491.2px;top:116.8px;width:1.8px;height:2.5px;background:#2c2c2c;border-radius:0.9px;"></div>
<div style="left:498.4px;top:116.8px;width:2.2px;height:2.5px;background:#2c2c2c;border-radius:0.6px;"></div>
<span style="left:504px;top:117px;font-size:20.8px;line-height:20.8px;color:#2a2a2a;transform:scale(0.125,0.125);transform-origin:0 0;">周三 下午10:06</span>
<div style="left:529px;top:116.9px;width:2px;height:2px;border:0.5px solid #444;border-radius:1px;"></div>
<div style="left:536px;top:116.7px;width:2.7px;height:2.7px;background:#2a3a9a;border-radius:1.4px;"></div>
<div style="left:542.4px;top:117.1px;width:3px;height:0.5px;background:#444;"></div>
<div style="left:542.4px;top:118px;width:3px;height:0.5px;background:#444;"></div>
<div style="left:542.4px;top:118.9px;width:3px;height:0.5px;background:#444;"></div>
<div style="left:148.2px;top:120px;width:401.4px;height:5.6px;background:linear-gradient(#4a4a4a,#333);"></div>
<div style="left:150.05px;top:121.5px;width:2.5px;height:2.5px;background:#e2463f;border-radius:1.3px;"></div>
<div style="left:154.05px;top:121.5px;width:2.5px;height:2.5px;background:#e0aa2e;border-radius:1.3px;"></div>
<div style="left:158.15px;top:121.5px;width:2.5px;height:2.5px;background:#2fb94a;border-radius:1.3px;"></div>
<div style="left:164.6px;top:121.2px;width:39.4px;height:4.3px;background:#5c5c5c;border-radius:1.4px 1.4px 0 0;"></div>
<div style="left:166px;top:122.3px;width:1.6px;height:1.8px;background:#8aa0c8;"></div>
<span style="left:168.4px;top:123px;font-size:20.8px;line-height:20.8px;color:#bdbdbd;transform:scale(0.11538,0.125);transform-origin:0 0;">Untitled</span>
<div style="left:528px;top:120.8px;width:20.8px;height:4px;background:#1e1e1e;border-radius:0.6px;"></div>
<span style="left:531.4px;top:122px;font-size:20.8px;line-height:20.8px;color:#b0b0b0;transform:scale(0.11538,0.125);transform-origin:0 0;">KOVLGamer</span>
<div style="left:524px;top:121.8px;width:2.4px;height:1.8px;background:#dfe8f8;border-radius:0.9px;"></div>
<div style="left:148.8px;top:126px;width:64.8px;height:140.4px;background:#2b2b2b;"></div>
<div style="left:149.4px;top:126.6px;width:63.6px;height:3.9px;background:#262626;"></div>
<div style="left:149.8px;top:126.8px;width:30.4px;height:3.7px;background:#555;border-radius:1px 1px 0 0;"></div>
<div style="left:151px;top:127.7px;width:2px;height:2px;background:#b0b0b0;border-radius:0.5px;"></div>
<span style="left:154px;top:128px;font-size:20.8px;line-height:20.8px;color:#c8c8c8;transform:scale(0.11538,0.125);transform-origin:0 0;">Modes</span>
<div style="left:149.4px;top:130.5px;width:63.6px;height:11.2px;background:#424242;"></div>
<div style="left:150.0px;top:130.9px;width:10.2px;height:10.3px;background:#1c1c1c;border-radius:0.5px;"></div>
<svg style="left:150.0px;top:130.6px" width="10.4" height="11" viewBox="0 0 10.4 11"><path d="M2.4 4.4l3-1.6 3.4 1.4v3.6l-3.2 1.8-3.2-1.6z" fill="#d98a3c"/><path d="M2.4 4.4l3.2 1.4 3.2-1.6" stroke="#fff" stroke-width="0.5" fill="none"/><circle cx="3.4" cy="7.4" r="1.5" fill="#f2f2f2"/></svg>
<div style="left:161.05px;top:130.9px;width:10.2px;height:10.3px;background:#262626;border-radius:0.5px;"></div>
<svg style="left:161.05px;top:130.6px" width="10.4" height="11" viewBox="0 0 10.4 11"><path d="M2.2 8.6l1-2 5-4.4 0.8 0.8-4.6 4.8z" fill="#ece3d0"/><path d="M2 8.8l1.2-2.2 1 1z" fill="#d98a3c"/></svg>
<div style="left:172.1px;top:130.9px;width:10.2px;height:10.3px;background:#262626;border-radius:0.5px;"></div>
<svg style="left:172.1px;top:130.6px" width="10.4" height="11" viewBox="0 0 10.4 11"><path d="M1.6 7.6l2.2-3.2 1.6 1.2 1.4-2.4 2.4 4.4z" fill="#ece3d0"/><path d="M1.6 7.6h7.6l-1 1.2h-5.4z" fill="#d98a3c"/></svg>
<div style="left:183.15px;top:130.9px;width:10.2px;height:10.3px;background:#262626;border-radius:0.5px;"></div>
<svg style="left:183.15px;top:130.6px" width="10.4" height="11" viewBox="0 0 10.4 11"><path d="M5.2 9v-4M5.2 6.4c-2.2-0.4-2.8-1.8-2.6-3.2 1.8 0.2 2.8 1.2 2.6 3.2zM5.2 5.2c0.2-2 1.4-3 3-3 0 1.8-1 3-3 3z" fill="#ece3d0" stroke="#d98a3c" stroke-width="0.4"/></svg>
<div style="left:194.2px;top:130.9px;width:10.2px;height:10.3px;background:#262626;border-radius:0.5px;"></div>
<svg style="left:194.2px;top:130.6px" width="10.4" height="11" viewBox="0 0 10.4 11"><path d="M2.4 3.4l3-1.4 3 1.4v4l-3 1.6-3-1.6z" fill="#c8c8c8"/><path d="M5.4 5v4l3-1.6v-4z" fill="#d98a3c"/><path d="M2.4 3.4l3 1.6 3-1.6" stroke="#fff" stroke-width="0.4" fill="none"/></svg>
<div style="left:150px;top:142.2px;width:60.6px;height:3.5px;background:#b0b0b0;border-radius:0.5px;"></div>
<span style="left:151px;top:143px;font-size:20.8px;line-height:20.8px;color:#8a8a8a;transform:scale(0.10577,0.125);transform-origin:0 0;">Search Classes</span>
<div style="left:211px;top:142.6px;width:1.2px;height:2.8px;background:#ddd;"></div>
<div style="left:149.4px;top:147px;width:24px;height:119px;background:#3d3d3d;"></div>
<div style="left:149.4px;top:146.7px;width:24px;height:5.8px;background:#484848;"></div>
<span style="left:150.4px;top:149px;font-size:20.8px;line-height:20.8px;color:#f4f4f4;transform:scale(0.11538,0.125);transform-origin:0 0;font-weight:bold;">Recently Placed</span>
<div style="left:149.4px;top:152.88px;width:24px;height:6.2px;background:#202020;"></div>
<span style="left:150.4px;top:155px;font-size:20.8px;line-height:20.8px;color:#f4f4f4;transform:scale(0.11538,0.125);transform-origin:0 0;font-weight:bold;">Basic</span>
<span style="left:150.4px;top:162px;font-size:20.8px;line-height:20.8px;color:#f4f4f4;transform:scale(0.11538,0.125);transform-origin:0 0;font-weight:bold;">Lights</span>
<span style="left:150.4px;top:168px;font-size:20.8px;line-height:20.8px;color:#f4f4f4;transform:scale(0.11538,0.125);transform-origin:0 0;font-weight:bold;">Cinematic</span>
<span style="left:150.4px;top:174px;font-size:20.8px;line-height:20.8px;color:#f4f4f4;transform:scale(0.11538,0.125);transform-origin:0 0;font-weight:bold;">Visual Effects</span>
<span style="left:150.4px;top:180px;font-size:20.8px;line-height:20.8px;color:#f4f4f4;transform:scale(0.11538,0.125);transform-origin:0 0;font-weight:bold;">Geometry</span>
<span style="left:150.4px;top:187px;font-size:20.8px;line-height:20.8px;color:#f4f4f4;transform:scale(0.11538,0.125);transform-origin:0 0;font-weight:bold;">Volumes</span>
<span style="left:150.4px;top:193px;font-size:20.8px;line-height:20.8px;color:#f4f4f4;transform:scale(0.11538,0.125);transform-origin:0 0;font-weight:bold;">All Classes</span>
<span style="left:165.4px;top:202px;font-size:32px;line-height:32px;color:#d8382c;transform:scale(0.125,0.125);transform-origin:0 0;">3</span>
<div style="left:173.4px;top:147px;width:37.6px;height:119px;background:#2a2a2a;"></div>
<div style="left:174.8px;top:148.1px;width:7.6px;height:7.9px;background:linear-gradient(#2c2c2c,#6e6e6e 70%,#9a9a9a);"></div>
<svg style="left:174.8px;top:148.1px" width="7.6" height="7.9" viewBox="0 0 7.2 7.6"><circle cx="3.6" cy="3.6" r="2.4" fill="#f0f0f0"/><rect x="0" y="6.6" width="7.2" height="1" fill="#f4f4f4"/></svg>
<span style="left:183.6px;top:151px;font-size:20.8px;line-height:20.8px;color:#d2d2d2;transform:scale(0.1226,0.125);transform-origin:0 0;">Empty Actor</span>
<div style="left:206.8px;top:150.8px;width:2.4px;height:2.4px;border:0.4px solid #5e5e66;border-radius:1.2px;"></div>
<div style="left:174.8px;top:157.93px;width:7.6px;height:7.9px;background:linear-gradient(#2c2c2c,#6e6e6e 70%,#9a9a9a);"></div>
<svg style="left:174.8px;top:157.93px" width="7.6" height="7.9" viewBox="0 0 7.2 7.6"><rect x="2.6" y="0.8" width="2" height="5.6" fill="#e8e8e8"/><rect x="0" y="6.6" width="7.2" height="1" fill="#f4f4f4"/></svg>
<span style="left:183.6px;top:161px;font-size:20.8px;line-height:20.8px;color:#d2d2d2;transform:scale(0.1226,0.125);transform-origin:0 0;">Empty Character</span>
<div style="left:206.8px;top:160.63000000000002px;width:2.4px;height:2.4px;border:0.4px solid #5e5e66;border-radius:1.2px;"></div>
<div style="left:174.8px;top:167.76px;width:7.6px;height:7.9px;background:linear-gradient(#2c2c2c,#6e6e6e 70%,#9a9a9a);"></div>
<svg style="left:174.8px;top:167.76px" width="7.6" height="7.9" viewBox="0 0 7.2 7.6"><rect x="2.6" y="1.2" width="2" height="5.2" fill="#e8e8e8"/><rect x="0" y="6.6" width="7.2" height="1" fill="#f4f4f4"/></svg>
<span style="left:183.6px;top:171px;font-size:20.8px;line-height:20.8px;color:#d2d2d2;transform:scale(0.1226,0.125);transform-origin:0 0;">Empty Pawn</span>
<div style="left:206.8px;top:170.46px;width:2.4px;height:2.4px;border:0.4px solid #5e5e66;border-radius:1.2px;"></div>
<div style="left:174.8px;top:177.59px;width:7.6px;height:7.9px;background:linear-gradient(#2c2c2c,#6e6e6e 70%,#9a9a9a);"></div>
<svg style="left:174.8px;top:177.59px" width="7.6" height="7.9" viewBox="0 0 7.2 7.6"><circle cx="3.6" cy="2.8" r="1.8" fill="#fff"/><rect x="3" y="4.4" width="1.2" height="1.6" fill="#ddd"/><rect x="0" y="6.6" width="7.2" height="1" fill="#f4f4f4"/></svg>
<span style="left:183.6px;top:181px;font-size:20.8px;line-height:20.8px;color:#d2d2d2;transform:scale(0.1226,0.125);transform-origin:0 0;">Point Light</span>
<div style="left:206.8px;top:180.29000000000002px;width:2.4px;height:2.4px;border:0.4px solid #5e5e66;border-radius:1.2px;"></div>
<div style="left:174.8px;top:187.42px;width:7.6px;height:7.9px;background:linear-gradient(#2c2c2c,#6e6e6e 70%,#9a9a9a);"></div>
<svg style="left:174.8px;top:187.42px" width="7.6" height="7.9" viewBox="0 0 7.2 7.6"><path d="M1.4 5.6c0.4-3 2-4 4.4-3.4l-1 1.4 1.4 0.6-1 1.4z" fill="#f4f4f4"/><rect x="0" y="6.6" width="7.2" height="1" fill="#f4f4f4"/></svg>
<span style="left:183.6px;top:191px;font-size:20.8px;line-height:20.8px;color:#d2d2d2;transform:scale(0.1226,0.125);transform-origin:0 0;">Player Start</span>
<div style="left:206.8px;top:190.12px;width:2.4px;height:2.4px;border:0.4px solid #5e5e66;border-radius:1.2px;"></div>
<div style="left:174.8px;top:197.25px;width:7.6px;height:7.9px;background:linear-gradient(#2c2c2c,#6e6e6e 70%,#9a9a9a);"></div>
<svg style="left:174.8px;top:197.25px" width="7.6" height="7.9" viewBox="0 0 7.2 7.6"><rect x="1.4" y="1.6" width="4.6" height="4.4" fill="#e4e4e4"/><rect x="0" y="6.6" width="7.2" height="1" fill="#f4f4f4"/></svg>
<span style="left:183.6px;top:200px;font-size:20.8px;line-height:20.8px;color:#d2d2d2;transform:scale(0.1226,0.125);transform-origin:0 0;">Cube</span>
<div style="left:206.8px;top:199.95000000000002px;width:2.4px;height:2.4px;border:0.4px solid #5e5e66;border-radius:1.2px;"></div>
<div style="left:174.8px;top:207.08px;width:7.6px;height:7.9px;background:linear-gradient(#2c2c2c,#6e6e6e 70%,#9a9a9a);"></div>
<svg style="left:174.8px;top:207.08px" width="7.6" height="7.9" viewBox="0 0 7.2 7.6"><circle cx="3.6" cy="3.8" r="2.6" fill="#ececec"/><rect x="0" y="6.6" width="7.2" height="1" fill="#f4f4f4"/></svg>
<span style="left:183.6px;top:210px;font-size:20.8px;line-height:20.8px;color:#d2d2d2;transform:scale(0.1226,0.125);transform-origin:0 0;">Sphere</span>
<div style="left:206.8px;top:209.78000000000003px;width:2.4px;height:2.4px;border:0.4px solid #5e5e66;border-radius:1.2px;"></div>
<div style="left:174.8px;top:216.91px;width:7.6px;height:7.9px;background:linear-gradient(#2c2c2c,#6e6e6e 70%,#9a9a9a);"></div>
<svg style="left:174.8px;top:216.91px" width="7.6" height="7.9" viewBox="0 0 7.2 7.6"><rect x="2" y="1" width="3.2" height="5.4" rx="0.8" fill="#e8e8e8"/><rect x="0" y="6.6" width="7.2" height="1" fill="#f4f4f4"/></svg>
<span style="left:183.6px;top:220px;font-size:20.8px;line-height:20.8px;color:#d2d2d2;transform:scale(0.1226,0.125);transform-origin:0 0;">Cylinder</span>
<div style="left:206.8px;top:219.61px;width:2.4px;height:2.4px;border:0.4px solid #5e5e66;border-radius:1.2px;"></div>
<div style="left:174.8px;top:226.73999999999998px;width:7.6px;height:7.9px;background:linear-gradient(#2c2c2c,#6e6e6e 70%,#9a9a9a);"></div>
<svg style="left:174.8px;top:226.74px" width="7.6" height="7.9" viewBox="0 0 7.2 7.6"><path d="M3.6 0.8l2.4 5.6h-4.8z" fill="#ececec"/><rect x="0" y="6.6" width="7.2" height="1" fill="#f4f4f4"/></svg>
<span style="left:183.6px;top:230px;font-size:20.8px;line-height:20.8px;color:#d2d2d2;transform:scale(0.1226,0.125);transform-origin:0 0;">Cone</span>
<div style="left:206.8px;top:229.44px;width:2.4px;height:2.4px;border:0.4px solid #5e5e66;border-radius:1.2px;"></div>
<div style="left:174.8px;top:236.57px;width:7.6px;height:7.9px;background:linear-gradient(#2c2c2c,#6e6e6e 70%,#9a9a9a);"></div>
<svg style="left:174.8px;top:236.57px" width="7.6" height="7.9" viewBox="0 0 7.2 7.6"><path d="M0.8 4.4h5.6v1.8h-5.6z" fill="#e8e8e8"/><rect x="0" y="6.6" width="7.2" height="1" fill="#f4f4f4"/></svg>
<span style="left:183.6px;top:240px;font-size:20.8px;line-height:20.8px;color:#d2d2d2;transform:scale(0.1226,0.125);transform-origin:0 0;">Plane</span>
<div style="left:206.8px;top:239.27px;width:2.4px;height:2.4px;border:0.4px solid #5e5e66;border-radius:1.2px;"></div>
<div style="left:174.8px;top:246.4px;width:7.6px;height:7.9px;background:linear-gradient(#2c2c2c,#6e6e6e 70%,#9a9a9a);"></div>
<svg style="left:174.8px;top:246.4px" width="7.6" height="7.9" viewBox="0 0 7.2 7.6"><rect x="1.4" y="1.6" width="4.6" height="4.4" fill="none" stroke="#e4e4e4" stroke-width="0.7"/><path d="M1.4 4h4.6" stroke="#e4e4e4" stroke-width="0.6"/><rect x="0" y="6.6" width="7.2" height="1" fill="#f4f4f4"/></svg>
<span style="left:183.6px;top:250px;font-size:20.8px;line-height:20.8px;color:#d2d2d2;transform:scale(0.1226,0.125);transform-origin:0 0;">Box Trigger</span>
<div style="left:206.8px;top:249.10000000000002px;width:2.4px;height:2.4px;border:0.4px solid #5e5e66;border-radius:1.2px;"></div>
<div style="left:174.8px;top:256.23px;width:7.6px;height:7.9px;background:linear-gradient(#2c2c2c,#6e6e6e 70%,#9a9a9a);"></div>
<svg style="left:174.8px;top:256.23px" width="7.6" height="7.9" viewBox="0 0 7.2 7.6"><circle cx="3.6" cy="3.8" r="2.4" fill="none" stroke="#e4e4e4" stroke-width="0.7"/><path d="M1.2 4h4.8" stroke="#e4e4e4" stroke-width="0.6"/><rect x="0" y="6.6" width="7.2" height="1" fill="#f4f4f4"/></svg>
<span style="left:183.6px;top:259px;font-size:20.8px;line-height:20.8px;color:#d2d2d2;transform:scale(0.1226,0.125);transform-origin:0 0;">Sphere Trigger</span>
<div style="left:206.8px;top:258.93px;width:2.4px;height:2.4px;border:0.4px solid #5e5e66;border-radius:1.2px;"></div>
<div style="left:210.9px;top:147px;width:1.5px;height:118px;background:#dedede;"></div>
<div style="left:210.9px;top:147px;width:1.5px;height:3px;background:#f6f6f6;"></div>
<div style="left:148.4px;top:125.6px;width:65.6px;height:141.2px;border:1.3px solid #c02c1e;"></div>
<div style="left:215.6px;top:126px;width:253px;height:13.6px;background:#404040;"></div>
<div style="left:384px;top:126px;width:84.6px;height:13.6px;background:#5c5c5c;"></div>
<svg style="left:219.8px;top:126.8px" width="8.4" height="8" viewBox="0 0 8.4 8"><rect x="0.8" y="0.8" width="6.8" height="6.400" rx="0.500" fill="#6f8fd8"/><rect x="1.800" y="0.800" width="4.800" height="3.200" fill="#f6f7fb"/><rect x="2.400" y="4.800" width="3.600" height="2.400" fill="#cfd9f0"/></svg>
<span style="left:216.9px;top:136px;font-size:20.8px;line-height:20.8px;color:#d6d6d6;transform:scale(0.11538,0.125);transform-origin:0 0;">Save Current</span>
<svg style="left:238.60000000000002px;top:126.8px" width="8.4" height="8" viewBox="0 0 8.4 8"><path d="M1 4l3.2-2.6 3.6 1.4v2.6l-3.4 2.2-3.4-1.6z" fill="#9fb6dc"/><path d="M1 4l3.4 1.4 3.4-2.4" stroke="#eaf0fa" stroke-width="0.5" fill="none"/><circle cx="6.4" cy="6.2" r="1.3" fill="#d03a2a"/></svg>
<span style="left:234.5px;top:136px;font-size:20.8px;line-height:20.8px;color:#d6d6d6;transform:scale(0.11538,0.125);transform-origin:0 0;">Source Control</span>
<span style="left:250.20000000000002px;top:132px;font-size:20.8px;line-height:20.8px;color:#ccc;transform:scale(0.11538,0.125);transform-origin:0 0;">▾</span>
<svg style="left:256.8px;top:126.8px" width="8.4" height="8" viewBox="0 0 8.4 8"><rect x="0.8" y="0.8" width="6.8" height="6.400" fill="#6888d4"/><path d="M1.400 2.200h5.600M1.400 3.900h5.600M1.400 5.600h5.600" stroke="#e8eefa" stroke-width="1.100"/></svg>
<span style="left:256.9px;top:136px;font-size:20.8px;line-height:20.8px;color:#d6d6d6;transform:scale(0.11538,0.125);transform-origin:0 0;">Content</span>
<svg style="left:271.40000000000003px;top:126.8px" width="8.4" height="8" viewBox="0 0 8.4 8"><path d="M2 1l4 1v5.4l-4-1z" fill="#e6eaf4"/><path d="M6 2l1-0.6v5.2l-1 0.8z" fill="#8aa0d0"/></svg>
<span style="left:269.1px;top:136px;font-size:20.8px;line-height:20.8px;color:#d6d6d6;transform:scale(0.11538,0.125);transform-origin:0 0;">Marketplace</span>
<svg style="left:286.2px;top:126.8px" width="8.4" height="8" viewBox="0 0 8.4 8"><circle cx="4.2" cy="4" r="3.1" fill="#2a3a5a"/><circle cx="4.2" cy="4" r="1.5" fill="#c8d4ea"/><path d="M4.2 0.6v1.6M4.2 5.8v1.6M0.8 4h1.6M6 4h1.6" stroke="#c8d4ea" stroke-width="0.9"/></svg>
<span style="left:285.7px;top:136px;font-size:20.8px;line-height:20.8px;color:#d6d6d6;transform:scale(0.11538,0.125);transform-origin:0 0;">Settings</span>
<span style="left:297.79999999999995px;top:132px;font-size:20.8px;line-height:20.8px;color:#ccc;transform:scale(0.11538,0.125);transform-origin:0 0;">▾</span>
<svg style="left:302.40000000000003px;top:126.8px" width="8.4" height="8" viewBox="0 0 8.4 8"><path d="M1 4.6l2-3h3.6l-1 3z" fill="#dfe6f4"/><rect x="0.8" y="4.6" width="6.6" height="2.4" fill="#5a7ec8"/><circle cx="2.2" cy="7" r="0.8" fill="#e8e8e8"/><circle cx="6" cy="7" r="0.8" fill="#e8e8e8"/></svg>
<span style="left:300.7px;top:136px;font-size:20.8px;line-height:20.8px;color:#d6d6d6;transform:scale(0.11538,0.125);transform-origin:0 0;">Blueprints</span>
<span style="left:314.0px;top:132px;font-size:20.8px;line-height:20.8px;color:#ccc;transform:scale(0.11538,0.125);transform-origin:0 0;">▾</span>
<svg style="left:318.8px;top:126.8px" width="8.4" height="8" viewBox="0 0 8.4 8"><rect x="0.8" y="2.4" width="6.8" height="4.8" fill="#5a7ec8"/><path d="M0.8 2.4l6.4-1.6 0.4 1.2-6.4 1.6z" fill="#e6eaf4"/><path d="M1.6 4h5M1.6 5.6h5" stroke="#c8d4ea" stroke-width="0.6"/></svg>
<span style="left:317.1px;top:136px;font-size:20.8px;line-height:20.8px;color:#d6d6d6;transform:scale(0.11538,0.125);transform-origin:0 0;">Cinematics</span>
<span style="left:330.4px;top:132px;font-size:20.8px;line-height:20.8px;color:#ccc;transform:scale(0.11538,0.125);transform-origin:0 0;">▾</span>
<svg style="left:334.2px;top:126.8px" width="8.4" height="8" viewBox="0 0 8.4 8"><path d="M1.2 3.6l3-1.4 3 1.4v3l-3 1.2-3-1.2z" fill="#4a6fc0"/><path d="M3.2 0.8h2v3h-2z" fill="#dfe6f4"/><path d="M1.2 3.6l3 1.2 3-1.2" stroke="#c8d4ea" stroke-width="0.5" fill="none"/></svg>
<span style="left:335.4px;top:136px;font-size:20.8px;line-height:20.8px;color:#d6d6d6;transform:scale(0.11538,0.125);transform-origin:0 0;">Build</span>
<span style="left:345.79999999999995px;top:132px;font-size:20.8px;line-height:20.8px;color:#ccc;transform:scale(0.11538,0.125);transform-origin:0 0;">▾</span>
<svg style="left:351.8px;top:126.8px" width="8.4" height="8" viewBox="0 0 8.4 8"><path d="M1.4 0.8l6 3.2-6 3.4z" fill="#f2f4fa"/></svg>
<span style="left:353.6px;top:136px;font-size:20.8px;line-height:20.8px;color:#d6d6d6;transform:scale(0.11538,0.125);transform-origin:0 0;">Play</span>
<span style="left:363.4px;top:132px;font-size:20.8px;line-height:20.8px;color:#ccc;transform:scale(0.11538,0.125);transform-origin:0 0;">▾</span>
<svg style="left:368.8px;top:126.8px" width="8.4" height="8" viewBox="0 0 8.4 8"><rect x="1" y="1.4" width="6.4" height="4.6" fill="#5a7ec8"/><rect x="1.8" y="2.2" width="4.8" height="3" fill="#dfe6f4"/><path d="M2.6 7h3.4" stroke="#c8d4ea" stroke-width="0.8"/><path d="M0.6 5.4c1.2 1.6 3 1.8 4.6 0.6" stroke="#eee" stroke-width="0.6" fill="none"/></svg>
<span style="left:369.5px;top:136px;font-size:20.8px;line-height:20.8px;color:#d6d6d6;transform:scale(0.11538,0.125);transform-origin:0 0;">Launch</span>
<span style="left:380.4px;top:132px;font-size:20.8px;line-height:20.8px;color:#ccc;transform:scale(0.11538,0.125);transform-origin:0 0;">▾</span>
<span style="left:394.40000000000003px;top:130px;font-size:32px;line-height:32px;color:#d8382c;transform:scale(0.125,0.125);transform-origin:0 0;">2</span>
<div style="left:214.8px;top:125.1px;width:254.8px;height:14.8px;border:1.3px solid #c02c1e;"></div>
<div style="left:215.6px;top:141px;width:253px;height:125.6px;background:radial-gradient(ellipse 75% 110% at 50% 46%,#dcdfeb 0%,#d9dce8 25%,#ccd0df 60%,#bcc0d1 100%);"></div>
<svg style="left:215.6px;top:141px" width="251" height="125.6" viewBox="0 0 251 125.6"><polygon points="85.10,50.30 166.40,50.30 223.00,118.00 26.80,118.00" fill="#3e4250"/><polygon points="85.10,50.30 93.23,50.30 91.17,53.28 82.53,53.28" fill="#4e5262"/><polygon points="79.63,56.65 88.84,56.65 86.17,60.51 76.31,60.51" fill="#4e5262"/><polygon points="72.48,64.95 83.10,64.95 79.52,70.13 68.02,70.13" fill="#4e5262"/><polygon points="62.75,76.25 75.29,76.25 70.22,83.58 56.44,83.58" fill="#4e5262"/><polygon points="48.74,92.52 64.03,92.52 56.32,103.69 39.13,103.69" fill="#4e5262"/><polygon points="91.17,53.28 99.81,53.28 98.04,56.65 88.84,56.65" fill="#4e5262"/><polygon points="86.17,60.51 96.03,60.51 93.71,64.95 83.10,64.95" fill="#4e5262"/><polygon points="79.52,70.13 91.01,70.13 87.82,76.25 75.29,76.25" fill="#4e5262"/><polygon points="70.22,83.58 84.00,83.58 79.33,92.52 64.03,92.52" fill="#4e5262"/><polygon points="56.32,103.69 73.51,103.69 66.04,118.00 46.42,118.00" fill="#4e5262"/><polygon points="101.36,50.30 109.49,50.30 108.44,53.28 99.81,53.28" fill="#4e5262"/><polygon points="98.04,56.65 107.25,56.65 105.90,60.51 96.03,60.51" fill="#4e5262"/><polygon points="93.71,64.95 104.33,64.95 102.51,70.13 91.01,70.13" fill="#4e5262"/><polygon points="87.82,76.25 100.36,76.25 97.78,83.58 84.00,83.58" fill="#4e5262"/><polygon points="79.33,92.52 94.63,92.52 90.70,103.69 73.51,103.69" fill="#4e5262"/><polygon points="108.44,53.28 117.08,53.28 116.46,56.65 107.25,56.65" fill="#4e5262"/><polygon points="105.90,60.51 115.76,60.51 114.95,64.95 104.33,64.95" fill="#4e5262"/><polygon points="102.51,70.13 114.00,70.13 112.89,76.25 100.36,76.25" fill="#4e5262"/><polygon points="97.78,83.58 111.55,83.58 109.92,92.52 94.63,92.52" fill="#4e5262"/><polygon points="90.70,103.69 107.89,103.69 105.28,118.00 85.66,118.00" fill="#4e5262"/><polygon points="117.62,50.30 125.75,50.30 125.71,53.28 117.08,53.28" fill="#4e5262"/><polygon points="116.46,56.65 125.67,56.65 125.62,60.51 115.76,60.51" fill="#4e5262"/><polygon points="114.95,64.95 125.57,64.95 125.50,70.13 114.00,70.13" fill="#4e5262"/><polygon points="112.89,76.25 125.42,76.25 125.33,83.58 111.55,83.58" fill="#4e5262"/><polygon points="109.92,92.52 125.22,92.52 125.08,103.69 107.89,103.69" fill="#4e5262"/><polygon points="125.71,53.28 134.35,53.28 134.88,56.65 125.67,56.65" fill="#4e5262"/><polygon points="125.62,60.51 135.48,60.51 136.18,64.95 125.57,64.95" fill="#4e5262"/><polygon points="125.50,70.13 137.00,70.13 137.96,76.25 125.42,76.25" fill="#4e5262"/><polygon points="125.33,83.58 139.11,83.58 140.52,92.52 125.22,92.52" fill="#4e5262"/><polygon points="125.08,103.69 142.27,103.69 144.52,118.00 124.90,118.00" fill="#4e5262"/><polygon points="133.88,50.30 142.01,50.30 142.98,53.28 134.35,53.28" fill="#4e5262"/><polygon points="134.88,56.65 144.09,56.65 145.35,60.51 135.48,60.51" fill="#4e5262"/><polygon points="136.18,64.95 146.80,64.95 148.49,70.13 137.00,70.13" fill="#4e5262"/><polygon points="137.96,76.25 150.49,76.25 152.89,83.58 139.11,83.58" fill="#4e5262"/><polygon points="140.52,92.52 155.81,92.52 159.46,103.69 142.27,103.69" fill="#4e5262"/><polygon points="142.98,53.28 151.62,53.28 153.30,56.65 144.09,56.65" fill="#4e5262"/><polygon points="145.35,60.51 155.21,60.51 157.42,64.95 146.80,64.95" fill="#4e5262"/><polygon points="148.49,70.13 159.99,70.13 163.03,76.25 150.49,76.25" fill="#4e5262"/><polygon points="152.89,83.58 166.67,83.58 171.11,92.52 155.81,92.52" fill="#4e5262"/><polygon points="159.46,103.69 176.65,103.69 183.76,118.00 164.14,118.00" fill="#4e5262"/><polygon points="150.14,50.30 158.27,50.30 160.26,53.28 151.62,53.28" fill="#4e5262"/><polygon points="153.30,56.65 162.50,56.65 165.07,60.51 155.21,60.51" fill="#4e5262"/><polygon points="157.42,64.95 168.03,64.95 171.49,70.13 159.99,70.13" fill="#4e5262"/><polygon points="163.03,76.25 175.56,76.25 180.45,83.58 166.67,83.58" fill="#4e5262"/><polygon points="171.11,92.52 186.41,92.52 193.84,103.69 176.65,103.69" fill="#4e5262"/><polygon points="160.26,53.28 168.89,53.28 171.71,56.65 162.50,56.65" fill="#4e5262"/><polygon points="165.07,60.51 174.94,60.51 178.65,64.95 168.03,64.95" fill="#4e5262"/><polygon points="171.49,70.13 182.98,70.13 188.10,76.25 175.56,76.25" fill="#4e5262"/><polygon points="180.45,83.58 194.22,83.58 201.70,92.52 186.41,92.52" fill="#4e5262"/><polygon points="193.84,103.69 211.03,103.69 223.00,118.00 203.38,118.00" fill="#4e5262"/><polygon points="26.80,118.00 223.00,118.00 222.00,123.40 27.40,123.40" fill="#373a47"/><polygon points="46.42,118.00 66.04,118.00 65.54,123.40 46.42,123.40" fill="#444857"/><polygon points="85.66,118.00 105.28,118.00 104.78,123.40 85.66,123.40" fill="#444857"/><polygon points="124.90,118.00 144.52,118.00 144.02,123.40 124.90,123.40" fill="#444857"/><polygon points="164.14,118.00 183.76,118.00 183.26,123.40 164.14,123.40" fill="#444857"/><polygon points="203.38,118.00 223.00,118.00 222.50,123.40 203.38,123.40" fill="#444857"/><path d="M27.40 123.40L26.80 118.00L85.10 50.30L166.40 50.30L223.00 118.00L222.00 123.40" fill="none" stroke="#e59a2a" stroke-width="0.6"/><path d="M112.2 12.9C112.6 7 116.6 4.1 121.05 4.1C125.5 4.1 129.5 7 129.9 12.9C127.5 10.6 124.6 9.7 121.05 9.7C117.5 9.7 114.600 10.600 112.200 12.900Z" fill="#1b1b1d"/><path d="M115.4 8.8l0.800 1.200M118.200 7.400l0.400 1.400M121.050 7v1.400M123.900 7.400l-0.400 1.400M126.700 8.800l-0.800 1.200" stroke="#8c8c8c" stroke-width="0.600"/><path d="M86.5 2.5l4-1.4M87 0.6l3 2.6M88.5 0.2v3.4" stroke="#c0503a" stroke-width="0.4"/><circle cx="123.7" cy="42.4" r="3.2" fill="#161618"/><path d="M121 43.600l3.400-3.800 1.200 0.800-3.600 4z" fill="#f4f4f4"/><rect x="123.6" y="57.6" width="2.6" height="1.6" fill="#8aa4c8"/><circle cx="125" cy="61.2" r="1.7" fill="#f0f0f4"/><rect x="124" y="62.8" width="2.2" height="3.4" fill="#dfe3ee"/><rect x="124.4" y="66" width="1.4" height="3" fill="#2a5ad0"/><rect x="124.4" y="69" width="1.6" height="1.4" fill="#2a8a3a"/><text x="127" y="70.4" font-size="2.2" fill="#4a9a2a" font-family="Liberation Sans">Floor</text><path d="M8.4 118.6v-5" stroke="#3a5ad8" stroke-width="0.5"/><path d="M8.4 118.6l4.6-1" stroke="#3aa83a" stroke-width="0.5"/><path d="M8.4 118.6l-2.6 1.6" stroke="#d03a3a" stroke-width="0.5"/><text x="7.4" y="113" font-size="2" fill="#3a5ad8" font-family="Liberation Sans">z</text><text x="4.2" y="122" font-size="2" fill="#d03a3a" font-family="Liberation Sans">x</text></svg>
<div style="left:217.5px;top:142.3px;width:3.4px;height:3.6px;background:#e6e6ea;border:0.4px solid #a6a6ac;border-radius:1px;"></div>
<span style="left:218.3px;top:143px;font-size:20.8px;line-height:20.8px;color:#444;transform:scale(0.09615,0.125);transform-origin:0 0;">▾</span>
<div style="left:222.8px;top:142.3px;width:19.2px;height:3.6px;background:#e6e6ea;border:0.4px solid #a6a6ac;border-radius:1px;"></div>
<div style="left:224px;top:143.3px;width:1.8px;height:1.6px;background:#3a78d0;border-radius:0.8px;"></div>
<span style="left:226.6px;top:143px;font-size:20.8px;line-height:20.8px;color:#2a2a2a;transform:scale(0.11779,0.125);transform-origin:0 0;font-weight:bold;">Perspective</span>
<div style="left:243.6px;top:142.3px;width:9px;height:3.6px;background:#e6e6ea;border:0.4px solid #a6a6ac;border-radius:1px;"></div>
<div style="left:244.6px;top:143.3px;width:2.2px;height:1.6px;background:#3a78d0;border-radius:0.8px;"></div>
<span style="left:247.6px;top:143px;font-size:20.8px;line-height:20.8px;color:#2a2a2a;transform:scale(0.11779,0.125);transform-origin:0 0;font-weight:bold;">Lit</span>
<div style="left:254px;top:142.3px;width:8.2px;height:3.6px;background:#e6e6ea;border:0.4px solid #a6a6ac;border-radius:1px;"></div>
<span style="left:255.2px;top:143px;font-size:20.8px;line-height:20.8px;color:#2a2a2a;transform:scale(0.11779,0.125);transform-origin:0 0;font-weight:bold;">Show</span>
<div style="left:384.2px;top:142px;width:4.6px;height:4.8px;background:#e39a2e;border:0.4px solid #b9741a;border-radius:0.5px;"></div>
<div style="left:385.5px;top:143.4px;width:2px;height:2px;background:#6a4210;border-radius:0.4px;"></div>
<div style="left:389.2px;top:142px;width:5.8px;height:4.8px;background:#ececec;border:0.4px solid #b0b0b0;border-radius:0.5px;"></div>
<div style="left:395.2px;top:142px;width:5.8px;height:4.8px;background:#ececec;border:0.4px solid #b0b0b0;border-radius:0.5px;"></div>
<div style="left:401.2px;top:142px;width:5.8px;height:4.8px;background:#ececec;border:0.4px solid #b0b0b0;border-radius:0.5px;"></div>
<div style="left:407.2px;top:142px;width:3.3px;height:4.8px;background:#ececec;border:0.4px solid #b0b0b0;border-radius:0.5px;"></div>
<div style="left:410.9px;top:142px;width:4.9px;height:4.8px;background:#e39a2e;border:0.4px solid #b9741a;border-radius:0.5px;"></div>
<div style="left:412.34999999999997px;top:143.4px;width:2px;height:2px;background:#6a4210;border-radius:0.4px;"></div>
<div style="left:416px;top:142px;width:6.4px;height:4.8px;background:#ececec;border:0.4px solid #b0b0b0;border-radius:0.5px;"></div>
<div style="left:423.4px;top:142px;width:4.9px;height:4.8px;background:#e39a2e;border:0.4px solid #b9741a;border-radius:0.5px;"></div>
<div style="left:424.84999999999997px;top:143.4px;width:2px;height:2px;background:#6a4210;border-radius:0.4px;"></div>
<div style="left:428.7px;top:142px;width:6.8px;height:4.8px;background:#ececec;border:0.4px solid #b0b0b0;border-radius:0.5px;"></div>
<div style="left:437.9px;top:142px;width:4.9px;height:4.8px;background:#e39a2e;border:0.4px solid #b9741a;border-radius:0.5px;"></div>
<div style="left:439.34999999999997px;top:143.4px;width:2px;height:2px;background:#6a4210;border-radius:0.4px;"></div>
<div style="left:443.2px;top:142px;width:8.1px;height:4.8px;background:#ececec;border:0.4px solid #b0b0b0;border-radius:0.5px;"></div>
<div style="left:452.9px;top:142px;width:9.6px;height:4.8px;background:#ececec;border:0.4px solid #b0b0b0;border-radius:0.5px;"></div>
<span style="left:417.6px;top:144px;font-size:20.8px;line-height:20.8px;color:#222;transform:scale(0.12019,0.125);transform-origin:0 0;font-weight:bold;">10</span>
<span style="left:430px;top:144px;font-size:20.8px;line-height:20.8px;color:#222;transform:scale(0.12019,0.125);transform-origin:0 0;font-weight:bold;">10°</span>
<span style="left:444.6px;top:144px;font-size:20.8px;line-height:20.8px;color:#222;transform:scale(0.12019,0.125);transform-origin:0 0;font-weight:bold;">0.25</span>
<span style="left:458.6px;top:144px;font-size:20.8px;line-height:20.8px;color:#222;transform:scale(0.12019,0.125);transform-origin:0 0;font-weight:bold;">4</span>
<div style="left:391px;top:143.2px;width:2.2px;height:2.2px;background:#3a6ad0;border-radius:0.6px;"></div>
<div style="left:397px;top:143.2px;width:2.2px;height:2.2px;background:#3a4a8a;border-radius:0.6px;"></div>
<div style="left:403px;top:143.2px;width:2.2px;height:2.2px;background:#555;border-radius:0.6px;"></div>
<div style="left:408px;top:143.2px;width:2.2px;height:2.2px;background:#888;border-radius:0.6px;"></div>
<div style="left:454.4px;top:143.2px;width:2.2px;height:2.2px;background:#222;border-radius:0.6px;"></div>
<span style="left:433.4px;top:262px;font-size:20.8px;line-height:20.8px;color:#6a8aa8;transform:scale(0.11058,0.125);transform-origin:0 0;">Level:  Untitled (Persistent)</span>
<span style="left:278.2px;top:185px;font-size:32px;line-height:32px;color:#d8382c;transform:scale(0.125,0.125);transform-origin:0 0;">4</span>
<div style="left:214.8px;top:139.8px;width:254.8px;height:127.4px;border:1.3px solid #c02c1e;"></div>
<div style="left:149.4px;top:267px;width:319.4px;height:73.4px;background:#3e3e3e;"></div>
<div style="left:149.4px;top:267.2px;width:319.4px;height:4px;background:#262626;"></div>
<div style="left:150px;top:267.6px;width:30.4px;height:3.6px;background:#5a5a5a;border-radius:1px 1px 0 0;"></div>
<div style="left:151px;top:268.4px;width:1.8px;height:1.8px;background:#5a7ad8;"></div>
<span style="left:153.4px;top:269px;font-size:20.8px;line-height:20.8px;color:#c8c8c8;transform:scale(0.11058,0.125);transform-origin:0 0;">Content Browser</span>
<div style="left:150px;top:273px;width:21.6px;height:5.3px;background:linear-gradient(#4fae4f,#358f35);border-radius:0.6px;"></div>
<div style="left:151px;top:274.4px;width:2.2px;height:2.4px;background:#dff0df;"></div>
<span style="left:154.2px;top:275px;font-size:20.8px;line-height:20.8px;color:#fff;transform:scale(0.125,0.125);transform-origin:0 0;font-weight:bold;">Add New</span>
<span style="left:168.4px;top:275px;font-size:20.8px;line-height:20.8px;color:#e8ffe8;transform:scale(0.10577,0.125);transform-origin:0 0;">▾</span>
<div style="left:174.2px;top:274.2px;width:2.4px;height:2.8px;background:#e6e6e6;"></div>
<span style="left:177.6px;top:275px;font-size:20.8px;line-height:20.8px;color:#f0f0f0;transform:scale(0.125,0.125);transform-origin:0 0;font-weight:bold;">Import</span>
<div style="left:192.2px;top:274.2px;width:2.2px;height:2.8px;border:0.5px solid #e0e0e0;"></div>
<span style="left:195.6px;top:275px;font-size:20.8px;line-height:20.8px;color:#f0f0f0;transform:scale(0.125,0.125);transform-origin:0 0;font-weight:bold;">Save All</span>
<div style="left:210.2px;top:273px;width:0.5px;height:5.4px;background:#6a6a6a;"></div>
<span style="left:211.8px;top:275px;font-size:20.8px;line-height:20.8px;color:#eee;transform:scale(0.125,0.125);transform-origin:0 0;">◆</span>
<span style="left:216.6px;top:275px;font-size:20.8px;line-height:20.8px;color:#999;transform:scale(0.10577,0.125);transform-origin:0 0;">▸</span>
<div style="left:220.8px;top:273px;width:0.5px;height:5.4px;background:#6a6a6a;"></div>
<svg style="left:222.6px;top:274px" width="4" height="3.4" viewBox="0 0 4 3.4"><path d="M0.3 0.4h1.4l0.5 0.6h1.5v2.1h-3.4z" fill="#f0f0f0"/></svg>
<span style="left:227.8px;top:275px;font-size:20.8px;line-height:20.8px;color:#f0f0f0;transform:scale(0.125,0.125);transform-origin:0 0;font-weight:bold;">Content</span>
<span style="left:241.6px;top:275px;font-size:20.8px;line-height:20.8px;color:#ccc;transform:scale(0.10577,0.125);transform-origin:0 0;">▸</span>
<div style="left:464.6px;top:274px;width:2px;height:2.6px;background:#ddd;border-radius:0.4px;"></div>
<div style="left:150px;top:280.6px;width:2.4px;height:3px;background:#dcdcdc;"></div>
<span style="left:154.6px;top:281px;font-size:20.8px;line-height:20.8px;color:#eee;transform:scale(0.10577,0.125);transform-origin:0 0;">▼</span>
<span style="left:157.2px;top:281px;font-size:20.8px;line-height:20.8px;color:#e8e8e8;transform:scale(0.11538,0.125);transform-origin:0 0;font-weight:bold;">Filters</span>
<span style="left:164.8px;top:281px;font-size:20.8px;line-height:20.8px;color:#ddd;transform:scale(0.10577,0.125);transform-origin:0 0;">▾</span>
<div style="left:168.8px;top:280.2px;width:292.8px;height:4px;background:#c6c6c6;border-radius:0.5px;"></div>
<span style="left:170px;top:281px;font-size:20.8px;line-height:20.8px;color:#8c8c8c;transform:scale(0.10577,0.125);transform-origin:0 0;">Search Content</span>
<div style="left:459px;top:280.8px;width:2.4px;height:2.8px;background:#444;"></div>
<div style="left:463.4px;top:280.8px;width:2px;height:2.8px;background:#777;"></div>
<span style="left:255.4px;top:292px;font-size:32px;line-height:32px;color:#d8382c;transform:scale(0.125,0.125);transform-origin:0 0;">6</span>
<span style="left:283px;top:312px;font-size:20.8px;line-height:20.8px;color:#b4b4b4;transform:scale(0.12019,0.125);transform-origin:0 0;">Drop files here or right click to create content.</span>
<span style="left:151px;top:337px;font-size:20.8px;line-height:20.8px;color:#c0c0c0;transform:scale(0.11538,0.125);transform-origin:0 0;">0 items</span>
<div style="left:445.6px;top:337px;width:2.4px;height:1.8px;background:#ccc;border-radius:0.9px;"></div>
<span style="left:448.8px;top:337px;font-size:20.8px;line-height:20.8px;color:#d0d0d0;transform:scale(0.11538,0.125);transform-origin:0 0;font-weight:bold;">View Options</span>
<span style="left:463.6px;top:337px;font-size:20.8px;line-height:20.8px;color:#ccc;transform:scale(0.09615,0.125);transform-origin:0 0;">▾</span>
<div style="left:148.4px;top:266.1px;width:321.2px;height:75px;border:1.3px solid #c02c1e;"></div>
<div style="left:471.4px;top:126.2px;width:77.6px;height:60px;background:#3e3e3e;"></div>
<div style="left:471.4px;top:126.4px;width:77.6px;height:4px;background:#262626;"></div>
<div style="left:472px;top:126.6px;width:30px;height:3.8px;background:#5a5a5a;border-radius:1px 1px 0 0;"></div>
<div style="left:473px;top:127.6px;width:1.8px;height:1.8px;background:#9ab4e0;"></div>
<span style="left:475.6px;top:128px;font-size:20.8px;line-height:20.8px;color:#c8c8c8;transform:scale(0.11058,0.125);transform-origin:0 0;">World Outliner</span>
<div style="left:472px;top:132.4px;width:68.6px;height:3.4px;background:#c4c4c4;border-radius:0.5px;"></div>
<span style="left:473px;top:133px;font-size:20.8px;line-height:20.8px;color:#8c8c8c;transform:scale(0.10577,0.125);transform-origin:0 0;">Search...</span>
<div style="left:538px;top:132.8px;width:2.2px;height:2.6px;background:#444;"></div>
<div style="left:542.6px;top:132.6px;width:4.4px;height:3px;background:#dfe8f4;border-radius:1.5px;"></div>
<div style="left:471.8px;top:137.4px;width:77px;height:4.2px;background:#262626;"></div>
<span style="left:476.4px;top:139px;font-size:20.8px;line-height:20.8px;color:#e8e8e8;transform:scale(0.12019,0.125);transform-origin:0 0;font-weight:bold;">Label</span>
<span style="left:528.2px;top:139px;font-size:20.8px;line-height:20.8px;color:#e8e8e8;transform:scale(0.12019,0.125);transform-origin:0 0;font-weight:bold;">Type</span>
<span style="left:500.4px;top:138px;font-size:20.8px;line-height:20.8px;color:#ddd;transform:scale(0.09615,0.125);transform-origin:0 0;">▴</span>
<span style="left:545.6px;top:140px;font-size:20.8px;line-height:20.8px;color:#ddd;transform:scale(0.09615,0.125);transform-origin:0 0;">▾</span>
<div style="left:472.8px;top:143.4px;width:2px;height:1.4px;background:#5a82d8;border-radius:0.7px;"></div>
<span style="left:477px;top:143px;font-size:20.8px;line-height:20.8px;color:#ddd;transform:scale(0.09615,0.125);transform-origin:0 0;">◢</span>
<div style="left:479.8px;top:143.2px;width:1.8px;height:1.8px;background:#c8c8c8;border-radius:0.4px;"></div>
<span style="left:483px;top:143px;font-size:20.8px;line-height:20.8px;color:#f0f0f0;transform:scale(0.125,0.125);transform-origin:0 0;">Untitled (Editor)</span>
<span style="left:528.2px;top:143px;font-size:20.8px;line-height:20.8px;color:#a4a4a4;transform:scale(0.1226,0.125);transform-origin:0 0;">World</span>
<div style="left:472.8px;top:147.18px;width:2px;height:1.4px;background:#5a82d8;border-radius:0.7px;"></div>
<div style="left:482.6px;top:146.98px;width:1.8px;height:1.8px;background:#c4c4c4;border-radius:0.6px;"></div>
<span style="left:486.2px;top:147px;font-size:20.8px;line-height:20.8px;color:#f0f0f0;transform:scale(0.125,0.125);transform-origin:0 0;">Atmospheric Fog</span>
<span style="left:528.2px;top:147px;font-size:20.8px;line-height:20.8px;color:#a4a4a4;transform:scale(0.1226,0.125);transform-origin:0 0;">AtmosphericFog</span>
<div style="left:471.8px;top:149.76px;width:77px;height:3.8px;background:#e7bd86;"></div>
<div style="left:472.8px;top:150.96px;width:2px;height:1.4px;background:#3a5aa8;border-radius:0.7px;"></div>
<div style="left:482.6px;top:150.76px;width:1.8px;height:1.8px;background:#555;border-radius:0.6px;"></div>
<span style="left:486.2px;top:151px;font-size:20.8px;line-height:20.8px;color:#1a1a1a;transform:scale(0.125,0.125);transform-origin:0 0;font-weight:bold;">Floor</span>
<span style="left:528.2px;top:151px;font-size:20.8px;line-height:20.8px;color:#6a5a40;transform:scale(0.1226,0.125);transform-origin:0 0;">StaticMeshActor</span>
<div style="left:472.8px;top:154.74px;width:2px;height:1.4px;background:#5a82d8;border-radius:0.7px;"></div>
<div style="left:482.6px;top:154.54px;width:1.8px;height:1.8px;background:#c4c4c4;border-radius:0.6px;"></div>
<span style="left:486.2px;top:155px;font-size:20.8px;line-height:20.8px;color:#f0f0f0;transform:scale(0.125,0.125);transform-origin:0 0;">Light Source</span>
<span style="left:528.2px;top:155px;font-size:20.8px;line-height:20.8px;color:#a4a4a4;transform:scale(0.1226,0.125);transform-origin:0 0;">DirectionalLight</span>
<div style="left:472.8px;top:158.52px;width:2px;height:1.4px;background:#5a82d8;border-radius:0.7px;"></div>
<div style="left:482.6px;top:158.32px;width:1.8px;height:1.8px;background:#c4c4c4;border-radius:0.6px;"></div>
<span style="left:486.2px;top:158px;font-size:20.8px;line-height:20.8px;color:#f0f0f0;transform:scale(0.125,0.125);transform-origin:0 0;">Player Start</span>
<span style="left:528.2px;top:158px;font-size:20.8px;line-height:20.8px;color:#a4a4a4;transform:scale(0.1226,0.125);transform-origin:0 0;">PlayerStart</span>
<div style="left:472.8px;top:162.3px;width:2px;height:1.4px;background:#5a82d8;border-radius:0.7px;"></div>
<div style="left:482.6px;top:162.1px;width:1.8px;height:1.8px;background:#c4c4c4;border-radius:0.6px;"></div>
<span style="left:486.2px;top:162px;font-size:20.8px;line-height:20.8px;color:#f0f0f0;transform:scale(0.125,0.125);transform-origin:0 0;">Sky Sphere</span>
<span style="left:528.2px;top:162px;font-size:20.8px;line-height:20.8px;color:#4a8ae0;transform:scale(0.1226,0.125);transform-origin:0 0;">Edit BP_Sky_Sphe</span>
<div style="left:472.8px;top:166.08px;width:2px;height:1.4px;background:#5a82d8;border-radius:0.7px;"></div>
<div style="left:482.6px;top:165.88px;width:1.8px;height:1.8px;background:#c4c4c4;border-radius:0.6px;"></div>
<span style="left:486.2px;top:166px;font-size:20.8px;line-height:20.8px;color:#f0f0f0;transform:scale(0.125,0.125);transform-origin:0 0;">SkyLight</span>
<span style="left:528.2px;top:166px;font-size:20.8px;line-height:20.8px;color:#a4a4a4;transform:scale(0.1226,0.125);transform-origin:0 0;">SkyLight</span>
<div style="left:472.8px;top:169.86px;width:2px;height:1.4px;background:#5a82d8;border-radius:0.7px;"></div>
<div style="left:482.6px;top:169.66px;width:1.8px;height:1.8px;background:#c4c4c4;border-radius:0.6px;"></div>
<span style="left:486.2px;top:170px;font-size:20.8px;line-height:20.8px;color:#f0f0f0;transform:scale(0.125,0.125);transform-origin:0 0;">SphereReflectionCapture</span>
<span style="left:528.2px;top:170px;font-size:20.8px;line-height:20.8px;color:#a4a4a4;transform:scale(0.1226,0.125);transform-origin:0 0;">SphereReflection</span>
<span style="left:513.4px;top:175px;font-size:32px;line-height:32px;color:#d8382c;transform:scale(0.125,0.125);transform-origin:0 0;">5</span>
<span style="left:473px;top:182px;font-size:20.8px;line-height:20.8px;color:#d0d0d0;transform:scale(0.11538,0.125);transform-origin:0 0;">7 actors (1 selected)</span>
<div style="left:526.4px;top:182.3px;width:2.6px;height:1.8px;background:#ddd;border-radius:0.9px;"></div>
<span style="left:530px;top:182px;font-size:20.8px;line-height:20.8px;color:#d8d8d8;transform:scale(0.11538,0.125);transform-origin:0 0;font-weight:bold;">View Options</span>
<span style="left:545.4px;top:182px;font-size:20.8px;line-height:20.8px;color:#ccc;transform:scale(0.09615,0.125);transform-origin:0 0;">▾</span>
<div style="left:470.6px;top:125.3px;width:79px;height:61.5px;border:1.3px solid #c02c1e;"></div>
<div style="left:471.4px;top:189.6px;width:77.6px;height:150.8px;background:#3e3e3e;"></div>
<div style="left:471.4px;top:189.6px;width:77.6px;height:3px;background:#262626;"></div>
<div style="left:472px;top:189.7px;width:29.4px;height:2.9px;background:#5a5a5a;border-radius:1px 1px 0 0;"></div>
<div style="left:473px;top:190.3px;width:1.8px;height:1.8px;background:#9ab4e0;"></div>
<span style="left:475.6px;top:190px;font-size:20.8px;line-height:20.8px;color:#c8c8c8;transform:scale(0.11058,0.125);transform-origin:0 0;">Details</span>
<div style="left:471.8px;top:192.7px;width:77px;height:5px;background:#545454;"></div>
<div style="left:472.2px;top:193.8px;width:2px;height:2.6px;background:#cfcfcf;"></div>
<div style="left:475.2px;top:193.5px;width:41.6px;height:3.6px;background:#f0f0f0;border-radius:0.4px;"></div>
<span style="left:476.4px;top:195px;font-size:20.8px;line-height:20.8px;color:#222;transform:scale(0.12019,0.125);transform-origin:0 0;">Floor</span>
<div style="left:518px;top:193.6px;width:3px;height:3px;background:#555;border:0.4px solid #888;"></div>
<div style="left:545.6px;top:193.6px;width:2.2px;height:2.8px;background:#ddd;border-radius:0.4px;"></div>
<div style="left:472px;top:199px;width:29.8px;height:4.9px;background:linear-gradient(#4fae4f,#358f35);border-radius:0.5px;"></div>
<span style="left:473px;top:201px;font-size:20.8px;line-height:20.8px;color:#fff;transform:scale(0.125,0.125);transform-origin:0 0;font-weight:bold;">+ Add Component</span>
<span style="left:498.2px;top:201px;font-size:20.8px;line-height:20.8px;color:#e8ffe8;transform:scale(0.10577,0.125);transform-origin:0 0;">▾</span>
<div style="left:510px;top:199px;width:38.6px;height:4.9px;background:linear-gradient(#3a80c8,#2a68b0);border-radius:0.5px;"></div>
<span style="left:513.4px;top:201px;font-size:20.8px;line-height:20.8px;color:#fff;transform:scale(0.125,0.125);transform-origin:0 0;font-weight:bold;">Blueprint/Add Script</span>
<div style="left:511.4px;top:200.4px;width:1.6px;height:2px;background:#cfe0f4;"></div>
<div style="left:472px;top:205.9px;width:74.4px;height:3px;background:#c2c2c2;border-radius:0.4px;"></div>
<span style="left:473px;top:207px;font-size:20.8px;line-height:20.8px;color:#8a8a8a;transform:scale(0.10096,0.125);transform-origin:0 0;">Search Components</span>
<div style="left:546.8px;top:206.2px;width:1.8px;height:2.4px;background:#ccc;"></div>
<div style="left:471.8px;top:209.6px;width:77px;height:3.9px;background:#e7c79c;"></div>
<div style="left:473px;top:210.4px;width:1.8px;height:2.2px;background:#6a5a40;"></div>
<span style="left:475.8px;top:211px;font-size:20.8px;line-height:20.8px;color:#2a2216;transform:scale(0.12019,0.125);transform-origin:0 0;font-weight:bold;">Floor(Instance)</span>
<div style="left:473.6px;top:216px;width:2px;height:2.2px;background:#9ab0a0;border-radius:1px;"></div>
<span style="left:477.2px;top:216px;font-size:20.8px;line-height:20.8px;color:#c4c4c4;transform:scale(0.11538,0.125);transform-origin:0 0;">StaticMeshComponent (Inherited)</span>
<div style="left:472px;top:223.4px;width:60.4px;height:3.5px;background:#bababa;border-radius:0.4px;"></div>
<span style="left:473px;top:224px;font-size:20.8px;line-height:20.8px;color:#7a7a7a;transform:scale(0.10577,0.125);transform-origin:0 0;">Search Details</span>
<div style="left:530.2px;top:224px;width:1.8px;height:2.4px;background:#444;"></div>
<div style="left:536.8px;top:223.6px;width:4.6px;height:3.4px;background:#5a5a5a;border:0.4px solid #999;"></div>
<div style="left:537.8px;top:224.4px;width:2.6px;height:1.8px;background:#ddd;"></div>
<div style="left:543.4px;top:224px;width:3.6px;height:2.6px;background:#ddd;border-radius:1.3px;"></div>
<span style="left:547px;top:225px;font-size:20.8px;line-height:20.8px;color:#ccc;transform:scale(0.08654,0.125);transform-origin:0 0;">▾</span>
<div style="left:471.8px;top:228.8px;width:75px;height:3.5px;background:#2c2c2c;"></div>
<span style="left:472.2px;top:230px;font-size:20.8px;line-height:20.8px;color:#ccc;transform:scale(0.08654,0.125);transform-origin:0 0;">◢</span>
<span style="left:474.2px;top:230px;font-size:20.8px;line-height:20.8px;color:#f0f0f0;transform:scale(0.12019,0.125);transform-origin:0 0;font-weight:bold;">Transform</span>
<span style="left:474.2px;top:234px;font-size:20.8px;line-height:20.8px;color:#c8c8c8;transform:scale(0.11538,0.125);transform-origin:0 0;">Location ▾</span>
<div style="left:498.2px;top:233.2px;width:13.3px;height:3.5px;background:#dcdcdc;border-radius:0.4px;"></div>
<div style="left:498.2px;top:233.2px;width:1.4px;height:3.5px;background:#d23a22;border-radius:0.4px 0 0 0.4px;"></div>
<span style="left:500.2px;top:234px;font-size:20.8px;line-height:20.8px;color:#333;transform:scale(0.10577,0.125);transform-origin:0 0;">0.0</span>
<div style="left:511.75px;top:233.2px;width:13.3px;height:3.5px;background:#dcdcdc;border-radius:0.4px;"></div>
<div style="left:511.75px;top:233.2px;width:1.4px;height:3.5px;background:#58a832;border-radius:0.4px 0 0 0.4px;"></div>
<span style="left:513.75px;top:234px;font-size:20.8px;line-height:20.8px;color:#333;transform:scale(0.10577,0.125);transform-origin:0 0;">0.0</span>
<div style="left:525.3px;top:233.2px;width:13.3px;height:3.5px;background:#dcdcdc;border-radius:0.4px;"></div>
<div style="left:525.3px;top:233.2px;width:1.4px;height:3.5px;background:#2f74d8;border-radius:0.4px 0 0 0.4px;"></div>
<span style="left:527.3px;top:234px;font-size:20.8px;line-height:20.8px;color:#333;transform:scale(0.10577,0.125);transform-origin:0 0;">20.0</span>
<span style="left:474.2px;top:239px;font-size:20.8px;line-height:20.8px;color:#c8c8c8;transform:scale(0.11538,0.125);transform-origin:0 0;">Rotation ▾</span>
<div style="left:498.2px;top:238.35px;width:13.3px;height:3.5px;background:#dcdcdc;border-radius:0.4px;"></div>
<div style="left:498.2px;top:238.35px;width:1.4px;height:3.5px;background:#d23a22;border-radius:0.4px 0 0 0.4px;"></div>
<span style="left:500.2px;top:239px;font-size:20.8px;line-height:20.8px;color:#333;transform:scale(0.10577,0.125);transform-origin:0 0;">0.0°</span>
<span style="left:508.0px;top:239px;font-size:20.8px;line-height:20.8px;color:#333;transform:scale(0.10577,0.125);transform-origin:0 0;">⤢</span>
<div style="left:511.75px;top:238.35px;width:13.3px;height:3.5px;background:#dcdcdc;border-radius:0.4px;"></div>
<div style="left:511.75px;top:238.35px;width:1.4px;height:3.5px;background:#58a832;border-radius:0.4px 0 0 0.4px;"></div>
<span style="left:513.75px;top:239px;font-size:20.8px;line-height:20.8px;color:#333;transform:scale(0.10577,0.125);transform-origin:0 0;">0.0°</span>
<span style="left:521.55px;top:239px;font-size:20.8px;line-height:20.8px;color:#333;transform:scale(0.10577,0.125);transform-origin:0 0;">⤢</span>
<div style="left:525.3px;top:238.35px;width:13.3px;height:3.5px;background:#dcdcdc;border-radius:0.4px;"></div>
<div style="left:525.3px;top:238.35px;width:1.4px;height:3.5px;background:#2f74d8;border-radius:0.4px 0 0 0.4px;"></div>
<span style="left:527.3px;top:239px;font-size:20.8px;line-height:20.8px;color:#333;transform:scale(0.10577,0.125);transform-origin:0 0;">0.0°</span>
<span style="left:535.0999999999999px;top:239px;font-size:20.8px;line-height:20.8px;color:#333;transform:scale(0.10577,0.125);transform-origin:0 0;">⤢</span>
<span style="left:474.2px;top:245px;font-size:20.8px;line-height:20.8px;color:#c8c8c8;transform:scale(0.11538,0.125);transform-origin:0 0;">Scale ▾</span>
<div style="left:498.2px;top:243.5px;width:13.3px;height:3.5px;background:#dcdcdc;border-radius:0.4px;"></div>
<div style="left:498.2px;top:243.5px;width:1.4px;height:3.5px;background:#d23a22;border-radius:0.4px 0 0 0.4px;"></div>
<span style="left:500.2px;top:245px;font-size:20.8px;line-height:20.8px;color:#333;transform:scale(0.10577,0.125);transform-origin:0 0;">1.0</span>
<div style="left:511.75px;top:243.5px;width:13.3px;height:3.5px;background:#dcdcdc;border-radius:0.4px;"></div>
<div style="left:511.75px;top:243.5px;width:1.4px;height:3.5px;background:#58a832;border-radius:0.4px 0 0 0.4px;"></div>
<span style="left:513.75px;top:245px;font-size:20.8px;line-height:20.8px;color:#333;transform:scale(0.10577,0.125);transform-origin:0 0;">1.0</span>
<div style="left:525.3px;top:243.5px;width:13.3px;height:3.5px;background:#dcdcdc;border-radius:0.4px;"></div>
<div style="left:525.3px;top:243.5px;width:1.4px;height:3.5px;background:#2f74d8;border-radius:0.4px 0 0 0.4px;"></div>
<span style="left:527.3px;top:245px;font-size:20.8px;line-height:20.8px;color:#333;transform:scale(0.10577,0.125);transform-origin:0 0;">1.0</span>
<div style="left:543.2px;top:234.4px;width:1.5px;height:1.4px;background:#c8b428;border-radius:0.4px;"></div>
<div style="left:543px;top:244.6px;width:1.8px;height:2.4px;background:#ddd;border-radius:0.4px;"></div>
<span style="left:474.2px;top:250px;font-size:20.8px;line-height:20.8px;color:#c8c8c8;transform:scale(0.11538,0.125);transform-origin:0 0;">Mobility</span>
<div style="left:498.2px;top:248.5px;width:14.4px;height:4px;background:#dba322;border-radius:0.5px;"></div>
<div style="left:499.4px;top:249.6px;width:1.8px;height:1.8px;background:#5a3e08;border-radius:0.9px;"></div>
<span style="left:502.6px;top:250px;font-size:20.8px;line-height:20.8px;color:#3a2a08;transform:scale(0.11538,0.125);transform-origin:0 0;font-weight:bold;">Static</span>
<div style="left:513.8px;top:248.5px;width:13.6px;height:4px;background:#484848;border:0.4px solid #5c5c5c;border-radius:0.5px;"></div>
<span style="left:517.6px;top:250px;font-size:20.8px;line-height:20.8px;color:#ddd;transform:scale(0.10577,0.125);transform-origin:0 0;">Stationar</span>
<div style="left:528.6px;top:248.5px;width:13.6px;height:4px;background:#484848;border:0.4px solid #5c5c5c;border-radius:0.5px;"></div>
<span style="left:532.6px;top:250px;font-size:20.8px;line-height:20.8px;color:#ddd;transform:scale(0.10577,0.125);transform-origin:0 0;">Movable</span>
<div style="left:546.8px;top:229px;width:1.6px;height:36px;background:#e0e0e0;"></div>
<div style="left:471.8px;top:256.8px;width:75px;height:3.5px;background:#2c2c2c;"></div>
<span style="left:472.2px;top:258px;font-size:20.8px;line-height:20.8px;color:#ccc;transform:scale(0.08654,0.125);transform-origin:0 0;">◢</span>
<span style="left:474.2px;top:258px;font-size:20.8px;line-height:20.8px;color:#f0f0f0;transform:scale(0.12019,0.125);transform-origin:0 0;font-weight:bold;">Static Mesh</span>
<span style="left:474.2px;top:268px;font-size:20.8px;line-height:20.8px;color:#c8c8c8;transform:scale(0.11538,0.125);transform-origin:0 0;">Static Mesh</span>
<div style="left:498.6px;top:262px;width:13.4px;height:13.6px;background:linear-gradient(#8c8c8c,#b4b4b4 60%,#a0a0a0);border:0.4px solid #555;"></div>
<div style="left:500px;top:267px;width:10.6px;height:5px;background:linear-gradient(#9c9c9c,#c0c0c0);"></div>
<div style="left:498.6px;top:274.4px;width:13.4px;height:1.2px;background:#2cc4c4;"></div>
<span style="left:490.2px;top:272px;font-size:32px;line-height:32px;color:#d8382c;transform:scale(0.125,0.125);transform-origin:0 0;">7</span>
<div style="left:514px;top:264.2px;width:31.4px;height:3.5px;background:#6a6a6a;border-radius:0.4px;"></div>
<span style="left:515px;top:265px;font-size:20.8px;line-height:20.8px;color:#e8e8e8;transform:scale(0.10577,0.125);transform-origin:0 0;">SM_Template_Map_Floor</span>
<span style="left:543px;top:265px;font-size:20.8px;line-height:20.8px;color:#eee;transform:scale(0.09615,0.125);transform-origin:0 0;">▾</span>
<div style="left:514.6px;top:270.2px;width:2px;height:1.8px;background:#eee;"></div>
<div style="left:518.6px;top:270px;width:2px;height:2px;border:0.5px solid #ddd;border-radius:1px;"></div>
<div style="left:522.4px;top:270.2px;width:1.8px;height:1.8px;background:#d8c030;border-radius:0.4px;"></div>
<span style="left:506.8px;top:278px;font-size:20.8px;line-height:20.8px;color:#ddd;transform:scale(0.125,0.125);transform-origin:0 0;">▼</span>
<div style="left:471.8px;top:281.4px;width:75px;height:3.5px;background:#2c2c2c;"></div>
<span style="left:472.2px;top:282px;font-size:20.8px;line-height:20.8px;color:#ccc;transform:scale(0.08654,0.125);transform-origin:0 0;">◢</span>
<span style="left:474.2px;top:282px;font-size:20.8px;line-height:20.8px;color:#f0f0f0;transform:scale(0.12019,0.125);transform-origin:0 0;font-weight:bold;">Materials</span>
<span style="left:474.2px;top:292px;font-size:20.8px;line-height:20.8px;color:#c8c8c8;transform:scale(0.11538,0.125);transform-origin:0 0;">Element 0</span>
<div style="left:498.6px;top:286.8px;width:13.4px;height:14px;background:#1c1c1c;border:0.4px solid #555;"></div>
<div style="left:499.4px;top:287.4px;width:11.8px;height:11.8px;background:radial-gradient(circle at 62% 36%,#c8c8c8 0%,#8a8a8a 35%,#2a2a2a 78%,#111 100%);border-radius:6px;"></div>
<div style="left:498.6px;top:299.6px;width:13.4px;height:1.2px;background:#3cb43c;"></div>
<div style="left:514px;top:287.2px;width:31.4px;height:3.5px;background:#6a6a6a;border-radius:0.4px;"></div>
<span style="left:515px;top:288px;font-size:20.8px;line-height:20.8px;color:#e8e8e8;transform:scale(0.10577,0.125);transform-origin:0 0;">DefaultMaterial</span>
<span style="left:543px;top:288px;font-size:20.8px;line-height:20.8px;color:#eee;transform:scale(0.09615,0.125);transform-origin:0 0;">▾</span>
<div style="left:514.6px;top:292.6px;width:2px;height:1.8px;background:#eee;"></div>
<div style="left:518.6px;top:292.4px;width:2px;height:2px;border:0.5px solid #ddd;border-radius:1px;"></div>
<div style="left:522.4px;top:292.6px;width:1.8px;height:1.8px;background:#d8c030;border-radius:0.4px;"></div>
<div style="left:514px;top:296.8px;width:13.4px;height:3.7px;background:#333;border:0.5px solid #eee;border-radius:0.4px;"></div>
<span style="left:515px;top:298px;font-size:20.8px;line-height:20.8px;color:#f4f4f4;transform:scale(0.11058,0.125);transform-origin:0 0;font-weight:bold;">Textures</span>
<span style="left:524.6px;top:298px;font-size:20.8px;line-height:20.8px;color:#eee;transform:scale(0.09615,0.125);transform-origin:0 0;">▾</span>
<span style="left:506.8px;top:304px;font-size:20.8px;line-height:20.8px;color:#ddd;transform:scale(0.125,0.125);transform-origin:0 0;">▼</span>
<div style="left:471.8px;top:306.8px;width:75px;height:3.5px;background:#2c2c2c;"></div>
<span style="left:472.2px;top:308px;font-size:20.8px;line-height:20.8px;color:#ccc;transform:scale(0.08654,0.125);transform-origin:0 0;">◢</span>
<span style="left:474.2px;top:308px;font-size:20.8px;line-height:20.8px;color:#f0f0f0;transform:scale(0.12019,0.125);transform-origin:0 0;font-weight:bold;">Physics</span>
<span style="left:474.2px;top:313px;font-size:20.8px;line-height:20.8px;color:#c8c8c8;transform:scale(0.11538,0.125);transform-origin:0 0;">Simulate Physics</span>
<div style="left:498.4px;top:311.9px;width:3px;height:3px;background:#d0d0d0;border-radius:0.4px;"></div>
<div style="left:474.2px;top:317.0px;width:3px;height:3px;background:#8a8a8a;border-radius:0.4px;"></div>
<span style="left:478.6px;top:318px;font-size:20.8px;line-height:20.8px;color:#7a7a7a;transform:scale(0.11538,0.125);transform-origin:0 0;">MassInKg</span>
<div style="left:498.4px;top:316.8px;width:20px;height:3.5px;background:#7c7c7c;border-radius:0.4px;"></div>
<span style="left:500.4px;top:318px;font-size:20.8px;line-height:20.8px;color:#333;transform:scale(0.10577,0.125);transform-origin:0 0;">2048.757568</span>
<span style="left:474.2px;top:323px;font-size:20.8px;line-height:20.8px;color:#c8c8c8;transform:scale(0.11538,0.125);transform-origin:0 0;">Linear Damping</span>
<div style="left:498.4px;top:321.9px;width:21.4px;height:3.5px;background:#dcdcdc;border-radius:0.4px;"></div>
<span style="left:500.4px;top:323px;font-size:20.8px;line-height:20.8px;color:#333;transform:scale(0.10577,0.125);transform-origin:0 0;">0.01</span>
<span style="left:516.8px;top:323px;font-size:20.8px;line-height:20.8px;color:#333;transform:scale(0.10577,0.125);transform-origin:0 0;">⤢</span>
<span style="left:474.2px;top:328px;font-size:20.8px;line-height:20.8px;color:#c8c8c8;transform:scale(0.11538,0.125);transform-origin:0 0;">Angular Damping</span>
<div style="left:498.4px;top:326.9px;width:21.4px;height:3.5px;background:#dcdcdc;border-radius:0.4px;"></div>
<span style="left:500.4px;top:328px;font-size:20.8px;line-height:20.8px;color:#333;transform:scale(0.10577,0.125);transform-origin:0 0;">0.0</span>
<span style="left:516.8px;top:328px;font-size:20.8px;line-height:20.8px;color:#333;transform:scale(0.10577,0.125);transform-origin:0 0;">⤢</span>
<span style="left:474.2px;top:333px;font-size:20.8px;line-height:20.8px;color:#c8c8c8;transform:scale(0.11538,0.125);transform-origin:0 0;">Enable Gravity</span>
<div style="left:498.4px;top:332.1px;width:3px;height:3px;background:#e0e0e0;border-radius:0.4px;"></div>
<span style="left:498.9px;top:333px;font-size:20.8px;line-height:20.8px;color:#222;transform:scale(0.11538,0.125);transform-origin:0 0;">✓</span>
<span style="left:474.2px;top:338px;font-size:20.8px;line-height:20.8px;color:#c8c8c8;transform:scale(0.11538,0.125);transform-origin:0 0;">Constraints</span>
<div style="left:470.6px;top:188.7px;width:79px;height:152.3px;border:1.3px solid #c02c1e;"></div>
<div style="left:148.2px;top:115.5px;width:83.4px;height:5.1px;border:0.8px solid #c02c1e;"></div>
<span style="left:235.20000000000002px;top:116px;font-size:32px;line-height:32px;color:#d8382c;transform:scale(0.125,0.125);transform-origin:0 0;">1</span>
<svg style="left:519.6px;top:254px" width="7" height="9" viewBox="0 0 7 9"><circle cx="2.6" cy="2.2" r="1.7" fill="none" stroke="#f4f4f4" stroke-width="0.7"/><path d="M3.4 3.4v4.6l1-0.9 0.8 1.7 0.8-0.4-0.8-1.6h1.4z" fill="#fff" stroke="#111" stroke-width="0.4"/></svg>
<div style="left:0px;top:401.7px;width:760px;height:8.7px;background:#d24726;"></div>
<span style="left:3px;top:404px;font-size:39.2px;line-height:39.2px;color:#fff;transform:scale(0.125,0.125);transform-origin:0 0;">幻灯片 第 6 张，共 28 张</span>
<svg style="left:64px;top:403px" width="8" height="6.4" viewBox="0 0 8 6.4"><path d="M0.6 0.6h3.2v4.6h-3.2zM3.8 0.6h1.4" fill="none" stroke="#fff" stroke-width="0.6"/><path d="M4.4 3.6l1 1.2 1.8-3" fill="none" stroke="#fff" stroke-width="0.6"/></svg>
<span style="left:77px;top:404px;font-size:39.2px;line-height:39.2px;color:#fff;transform:scale(0.125,0.125);transform-origin:0 0;">中文(中国)</span>
<svg style="left:570.6px;top:403px" width="6" height="6.4" viewBox="0 0 6 6.4"><path d="M0.6 5.4h4.6M1.4 4l0.8-2.8 1.6 0 0.8 2.8z" fill="none" stroke="#fff" stroke-width="0.6"/></svg>
<span style="left:577px;top:404px;font-size:39.2px;line-height:39.2px;color:#fff;transform:scale(0.125,0.125);transform-origin:0 0;">备注</span>
<svg style="left:594.4px;top:403.2px" width="6.4" height="6" viewBox="0 0 6.4 6"><path d="M0.4 0.6h5.4v3.4h-2.6l-1.4 1.4v-1.4h-1.4z" fill="#fff"/></svg>
<span style="left:600.6px;top:404px;font-size:39.2px;line-height:39.2px;color:#fff;transform:scale(0.125,0.125);transform-origin:0 0;">批注</span>
<div style="left:619px;top:401.6px;width:15.2px;height:8.8px;background:#b83c1f;"></div>
<svg style="left:622.6px;top:402.8px" width="8" height="6.6" viewBox="0 0 8 6.6"><rect x="0.5" y="0.5" width="6.6" height="5.4" fill="none" stroke="#fff" stroke-width="0.7"/><rect x="1.2" y="1.4" width="1.6" height="1.4" fill="#fff"/><path d="M3.4 0.6v5.2" stroke="#fff" stroke-width="0.6"/></svg>
<svg style="left:637.4px;top:402.8px" width="8" height="6.6" viewBox="0 0 8 6.6"><rect x="0.4" y="0.4" width="2.8" height="2.4" fill="#fff"/><rect x="4.2" y="0.4" width="2.8" height="2.4" fill="#fff"/><rect x="0.4" y="3.6" width="2.8" height="2.4" fill="#fff"/><rect x="4.2" y="3.6" width="2.8" height="2.4" fill="#fff"/></svg>
<svg style="left:652.4px;top:402.8px" width="8" height="6.6" viewBox="0 0 8 6.6"><path d="M0.6 0.8h2.8l0.4 0.5 0.4-0.5h2.6v4.4h-2.6l-0.4 0.5-0.4-0.5h-2.8z" fill="none" stroke="#fff" stroke-width="0.6"/><path d="M3.8 1.3v4.4" stroke="#fff" stroke-width="0.5"/></svg>
<svg style="left:667.2px;top:402.8px" width="8.4" height="6.6" viewBox="0 0 8.4 6.6"><path d="M0.4 0.6h7.4M1.2 0.6v3.4h5.8v-3.4M4.1 4v1.2M2.8 6l1.3-1 1.3 1" fill="none" stroke="#fff" stroke-width="0.6"/></svg>
<div style="left:680.8px;top:405.8px;width:2.4px;height:0.6px;background:#fff;"></div>
<div style="left:685px;top:405.8px;width:38.6px;height:0.5px;background:#f3c4b6;"></div>
<div style="left:704.4px;top:403.2px;width:1.5px;height:5.6px;background:#fff;"></div>
<div style="left:726.2px;top:405.8px;width:3px;height:0.6px;background:#fff;"></div>
<div style="left:727.4px;top:404.6px;width:0.6px;height:3px;background:#fff;"></div>
<span style="left:735px;top:404px;font-size:39.2px;line-height:39.2px;color:#fff;transform:scale(0.125,0.125);transform-origin:0 0;">110%</span>
<div style="left:752px;top:402px;width:8px;height:8.4px;background:#c8c4bc;"></div>
<div style="left:0px;top:410.4px;width:760px;height:17.6px;background:#d2cfc8;"></div>
<div style="left:0px;top:410.4px;width:760px;height:0.6px;background:#f6f4f0;"></div>
<div style="left:1px;top:412px;width:18.4px;height:15.4px;background:#d2cfc8;border-top:0.7px solid #fff;border-left:0.7px solid #fff;border-right:0.7px solid #6e6a62;border-bottom:0.7px solid #6e6a62;"></div>
<svg style="left:2px;top:415.6px" width="6" height="7" viewBox="0 0 6 7"><path d="M0.6 1.2c1-0.6 1.6-0.4 2.2 0l-0.4 2.2c-0.8-0.4-1.4-0.5-2.2 0z" fill="#e04a2a"/><path d="M3.2 1.4c0.8 0.4 1.4 0.4 2.2 0l-0.4 2.2c-0.8 0.4-1.4 0.4-2.2 0z" fill="#4aa83a"/><path d="M0.2 3.9c1-0.5 1.6-0.4 2.2 0l-0.4 2.2c-0.8-0.4-1.4-0.5-2.2 0z" fill="#3a6ad8"/><path d="M2.8 4.1c0.8 0.4 1.4 0.4 2.2 0l-0.4 2.2c-0.8 0.4-1.4 0.4-2.2 0z" fill="#e8b820"/></svg>
<span style="left:8px;top:417px;font-size:43.2px;line-height:43.2px;color:#111;transform:scale(0.125,0.125);transform-origin:0 0;font-weight:bold;">开始</span>
<div style="left:23.6px;top:411.8px;width:17.6px;height:16.2px;background:#d2cfc8;border-top:0.7px solid #fff;border-left:0.7px solid #fff;border-right:0.7px solid #6e6a62;border-bottom:0.7px solid #6e6a62;"></div>
<div style="left:42.6px;top:411.8px;width:19.4px;height:16.2px;background:#d2cfc8;border-top:0.7px solid #fff;border-left:0.7px solid #fff;border-right:0.7px solid #6e6a62;border-bottom:0.7px solid #6e6a62;"></div>
<div style="left:62.8px;top:411.8px;width:18.6px;height:16.2px;background:#f4f3f0;border-top:0.7px solid #807c74;border-left:0.7px solid #807c74;border-right:0.7px solid #fff;border-bottom:0.7px solid #fff;"></div>
<div style="left:83px;top:411.8px;width:18.2px;height:16.2px;background:#d2cfc8;border-top:0.7px solid #fff;border-left:0.7px solid #fff;border-right:0.7px solid #6e6a62;border-bottom:0.7px solid #6e6a62;"></div>
<svg style="left:25.8px;top:413px" width="13.4" height="13.4" viewBox="0 0 14 14"><circle cx="7" cy="7" r="6.4" fill="#e04a38"/><path d="M7 7L1.5 3.8A6.4 6.4 0 0 0 6 13.3z" fill="#3aa657"/><path d="M7 7L6 13.3A6.4 6.4 0 0 0 13.3 6L7 6z" fill="#f4c20d"/><path d="M7 7l6.3-1A6.4 6.4 0 0 0 1.5 3.8z" fill="#e04a38"/><circle cx="7" cy="7" r="3" fill="#fff"/><circle cx="7" cy="7" r="2.3" fill="#4a8af4"/></svg>
<svg style="left:45.4px;top:413px" width="13.4" height="13.4" viewBox="0 0 14 14"><circle cx="7" cy="7" r="6.400" fill="#2a8ed0"/><path d="M0.800 8.500a6.400 6.400 0 0 0 12.400 0z" fill="#1a4f98"/><path d="M1.400 5.400c1.600 0 2 5.400 3.800 5.400s1.600-5 3-5 1.200 3.800 2.400 3.800 1.200-2.600 2-4" fill="none" stroke="#7ed036" stroke-width="1.600"/></svg>
<svg style="left:65.4px;top:413px" width="14" height="14" viewBox="0 0 14 14"><rect x="5.4" y="2" width="7.4" height="10" fill="#fff" stroke="#d24726" stroke-width="0.7"/><path d="M8 4.6h3.6M8 7h3.6M8 9.4h3.6" stroke="#e59a86" stroke-width="0.7"/><path d="M0.8 1.6l7-1.2v13.200l-7-1.200z" fill="#d24726"/><text x="2.4" y="9.8" font-size="7.4" font-weight="bold" fill="#fff" font-family="Liberation Sans">P</text></svg>
<svg style="left:85.6px;top:413px" width="13.4" height="13.4" viewBox="0 0 14 14"><circle cx="7" cy="7" r="6.200" fill="#0c0c0c"/><text x="3.300" y="10.200" font-size="9" font-weight="bold" fill="#fff" font-family="Liberation Serif">U</text></svg>
<div style="left:701px;top:412px;width:59.6px;height:15.4px;background:#d2cfc8;border-top:0.7px solid #807c74;border-left:0.7px solid #807c74;border-right:0.7px solid #fff;border-bottom:0.7px solid #fff;"></div>
<span style="left:705px;top:418px;font-size:35.2px;line-height:35.2px;color:#222;transform:scale(0.125,0.125);transform-origin:0 0;font-weight:bold;">R</span>
<svg style="left:710.4px;top:416.4px" width="7" height="7" viewBox="0 0 7 7"><circle cx="3.4" cy="3.4" r="2.7" fill="#f4f4f4" stroke="#8a8a8a" stroke-width="0.5"/><path d="M3.4 0.8v5.2" stroke="#8a8a8a" stroke-width="0.6"/></svg>
<svg style="left:718.6px;top:415.8px" width="9" height="8" viewBox="0 0 9 8"><rect x="2.6" y="0.8" width="5" height="3.8" fill="#e8e8e8" stroke="#6a6a6a" stroke-width="0.5"/><rect x="0.8" y="2.6" width="5" height="3.8" fill="#dcdcdc" stroke="#6a6a6a" stroke-width="0.5"/><path d="M2 7.2h2.800" stroke="#6a6a6a" stroke-width="0.6"/></svg>
<span style="left:735.4px;top:415px;font-size:37.6px;line-height:37.6px;color:#222;transform:scale(0.125,0.125);transform-origin:0 0;">9:36</span>
<span style="left:730.6px;top:421px;font-size:37.6px;line-height:37.6px;color:#222;transform:scale(0.125,0.125);transform-origin:0 0;">2019/1/3</span>
<div style="left:753.6px;top:415.6px;width:6.4px;height:6.6px;background:#2a6ad0;"></div>
<div style="left:754.4px;top:416.4px;width:5.6px;height:3.4px;background:#6aa4f0;"></div>
<svg style="left:592px;top:17px" width="160" height="36" viewBox="0 0 160 36" opacity="0.6"><g fill="none" stroke="#e4e4e4"><path d="M9 3.500h28q6 0 5 6l-3 17q-1 6-7 6h-24q-6 0-5-6l3-17q1-6 7-6z" stroke-width="2.4"/><ellipse cx="22" cy="18" rx="12.500" ry="8" transform="rotate(-28 22 18)" stroke-width="2.600"/><circle cx="19" cy="20" r="3.400" fill="#e4e4e4" stroke="none"/></g><text x="46" y="24" font-size="26" font-weight="bold" font-style="italic" fill="#f2f2f2" stroke="#d4d4d4" stroke-width="0.9" font-family="Liberation Sans, Noto Sans CJK SC, sans-serif">火星网校</text><text x="47" y="33" font-size="7.400" font-weight="bold" fill="#e4e4e4" letter-spacing="6" font-family="Liberation Sans, sans-serif">www.hxsd.tv</text></svg>
<div style="left:522.2px;top:0px;width:207.4px;height:17px;background:linear-gradient(#97a5e8 0%,#a2b0ec 50%,#b2bef2 85%,#c0caf5 100%);"></div>
<div style="left:522.2px;top:0px;width:207.4px;height:1.2px;background:#8a8a8a;"></div>
<div style="left:524.6px;top:3px;width:0.9px;height:12.4px;background:#5a68a8;"></div>
<div style="left:593.4px;top:3px;width:0.9px;height:12.4px;background:#5a68a8;"></div>
<div style="left:725.8px;top:3px;width:0.9px;height:12.4px;background:#5a68a8;"></div>
<div style="left:529.6px;top:3.2px;width:12.4px;height:12.4px;background:#fdee9c;border:0.9px solid #ea6440;border-radius:1.4px;"></div>
<span style="left:531.7px;top:5px;font-size:32.8px;line-height:32.8px;color:#e4481e;transform:scale(0.125,0.125);transform-origin:0 0;font-weight:bold;">完美</span>
<span style="left:531.7px;top:10px;font-size:32.8px;line-height:32.8px;color:#e4481e;transform:scale(0.125,0.125);transform-origin:0 0;font-weight:bold;">画质</span>
<div style="left:545.4px;top:3.2px;width:12.4px;height:12.4px;background:#fdee9c;border:0.9px solid #ea6440;border-radius:1.4px;"></div>
<span style="left:547.5px;top:5px;font-size:32.8px;line-height:32.8px;color:#e4481e;transform:scale(0.125,0.125);transform-origin:0 0;font-weight:bold;">优秀</span>
<span style="left:547.5px;top:10px;font-size:32.8px;line-height:32.8px;color:#e4481e;transform:scale(0.125,0.125);transform-origin:0 0;font-weight:bold;">画质</span>
<div style="left:561.3px;top:3.2px;width:12.4px;height:12.4px;background:#fdee9c;border:0.9px solid #ea6440;border-radius:1.4px;"></div>
<span style="left:563.4px;top:5px;font-size:32.8px;line-height:32.8px;color:#e4481e;transform:scale(0.125,0.125);transform-origin:0 0;font-weight:bold;">较好</span>
<span style="left:563.4px;top:10px;font-size:32.8px;line-height:32.8px;color:#e4481e;transform:scale(0.125,0.125);transform-origin:0 0;font-weight:bold;">画质</span>
<div style="left:577.6px;top:3.2px;width:12.4px;height:12.4px;background:#9d9cf2;border:0.7px solid #b6b6f8;border-radius:1.4px;"></div>
<span style="left:579.7px;top:5px;font-size:32.8px;line-height:32.8px;color:#cfcffc;transform:scale(0.125,0.125);transform-origin:0 0;font-weight:bold;">一般</span>
<span style="left:579.7px;top:10px;font-size:32.8px;line-height:32.8px;color:#cfcffc;transform:scale(0.125,0.125);transform-origin:0 0;font-weight:bold;">画质</span>
<svg style="left:597.6px;top:2.2px" width="14" height="14" viewBox="0 0 14 14"><circle cx="7" cy="7" r="6.500" fill="#10141c"/><circle cx="7" cy="7" r="5.300" fill="#8ec4ee"/><circle cx="7" cy="7" r="5.300" fill="none" stroke="#dfeefa" stroke-width="0.700"/><path d="M5.200 3.800l4.200 4.600-1.900 0.100 0.900 1.900-1 0.500-0.900-1.900-1.300 1.300z" fill="#fff" stroke="#6a7a8a" stroke-width="0.300"/></svg>
<div style="left:614.7px;top:3.2px;width:12.4px;height:12.4px;background:#fdee9c;border:0.9px solid #ea6440;border-radius:1.4px;"></div>
<span style="left:616.8000000000001px;top:5px;font-size:32.8px;line-height:32.8px;color:#e4481e;transform:scale(0.125,0.125);transform-origin:0 0;font-weight:bold;">窗口</span>
<span style="left:616.8000000000001px;top:10px;font-size:32.8px;line-height:32.8px;color:#e4481e;transform:scale(0.125,0.125);transform-origin:0 0;font-weight:bold;">模式</span>
<div style="left:629.8px;top:3.2px;width:12.4px;height:12.4px;background:#fdee9c;border:0.9px solid #ea6440;border-radius:1.4px;"></div>
<span style="left:631.9px;top:5px;font-size:32.8px;line-height:32.8px;color:#e4481e;transform:scale(0.125,0.125);transform-origin:0 0;font-weight:bold;">快速</span>
<span style="left:631.9px;top:10px;font-size:32.8px;line-height:32.8px;color:#e4481e;transform:scale(0.125,0.125);transform-origin:0 0;font-weight:bold;">调节</span>
<div style="left:645.5px;top:3.2px;width:12.4px;height:12.4px;background:#9d9cf2;border:0.7px solid #b6b6f8;border-radius:1.4px;"></div>
<span style="left:647.6px;top:5px;font-size:32.8px;line-height:32.8px;color:#cfcffc;transform:scale(0.125,0.125);transform-origin:0 0;font-weight:bold;">屏幕</span>
<span style="left:647.6px;top:10px;font-size:32.8px;line-height:32.8px;color:#cfcffc;transform:scale(0.125,0.125);transform-origin:0 0;font-weight:bold;">窗口</span>
<div style="left:661.3px;top:3.2px;width:12.4px;height:12.4px;background:#fdee9c;border:0.9px solid #ea6440;border-radius:1.4px;"></div>
<span style="left:663.4px;top:5px;font-size:32.8px;line-height:32.8px;color:#e4481e;transform:scale(0.125,0.125);transform-origin:0 0;font-weight:bold;">语音</span>
<span style="left:663.4px;top:10px;font-size:32.8px;line-height:32.8px;color:#e4481e;transform:scale(0.125,0.125);transform-origin:0 0;font-weight:bold;">广播</span>
<svg style="left:678.2px;top:3px" width="12" height="13.4" viewBox="0 0 12 13.4"><path d="M3 1.700l6.600-1.100 1.500 6.800-6.600 1.300z" fill="#b7b2ee" stroke="#3a4a3a" stroke-width="0.500"/><path d="M3 1.700l6.600-1.100 1.500 6.800-6.600 1.300z" fill="none" stroke="#e6f0dc" stroke-width="0.900" transform="translate(0.600 0.500) scale(0.900)"/><path d="M6.400 8.400l1 2.400" stroke="#8a8a8a" stroke-width="1.200"/><path d="M0.600 11.900h10.600" stroke="#1a741a" stroke-width="1.700"/><path d="M1.200 10.800v1M3.400 10.600v1.200" stroke="#2a9a2a" stroke-width="0.700"/></svg>
<svg style="left:693.4px;top:3px" width="14" height="13" viewBox="0 0 14 13"><rect x="0.800" y="0.800" width="7" height="5.800" rx="0.500" fill="#86ccf8" stroke="#3a7cd4" stroke-width="0.800"/><rect x="7.400" y="2.200" width="5.800" height="4.800" rx="0.500" fill="#7cc4f4" stroke="#3a7cd4" stroke-width="0.800"/><path d="M2.600 8.400h8.800" stroke="#f4dc28" stroke-width="1.500"/><path d="M1 8.400l2.400-2v4zM13 8.400l-2.400-2v4z" fill="#f4dc28"/><path d="M2.200 11.400h4.400M8.400 11.400h4" stroke="#8c80cc" stroke-width="0.900"/><path d="M4.300 6.800v1M10.300 7.200v0.800" stroke="#6a8ad0" stroke-width="0.800"/></svg>
<svg style="left:710.400px;top:2.600px" width="12" height="13.400" viewBox="0 0 12 13.400"><path d="M1.800 5l7.800-3.900 0.900 7.300-7.500 3.400z" fill="#0e0e0e" stroke="#dcdcdc" stroke-width="0.700"/><path d="M1.500 5l0.900 7.800" stroke="#222" stroke-width="1"/><path d="M5 6.800a2 2 0 0 1 3.200-2 1.700 1.700 0 0 0-1.200 2.900 2 2 0 0 1-2-0.900z" fill="#f4dc3a"/></svg>
<div style="left:642px;top:17px;width:54px;height:0.9px;background:#7a88b8;opacity:0.55;"></div>
<div style="left:741.4px;top:389.4px;width:21.6px;height:21.6px;background:#15171b;border:1.3px solid #2a6ae0;border-radius:10.8px;"></div>
<span style="left:743.6px;top:397px;font-size:44.8px;line-height:44.8px;color:#fff;transform:scale(0.125,0.125);transform-origin:0 0;font-weight:bold;">UE</span>
<span style="left:751.2px;top:397px;font-size:44.8px;line-height:44.8px;color:#f08a1a;transform:scale(0.125,0.125);transform-origin:0 0;font-weight:bold;">JOY</span>
</div></body></html>
